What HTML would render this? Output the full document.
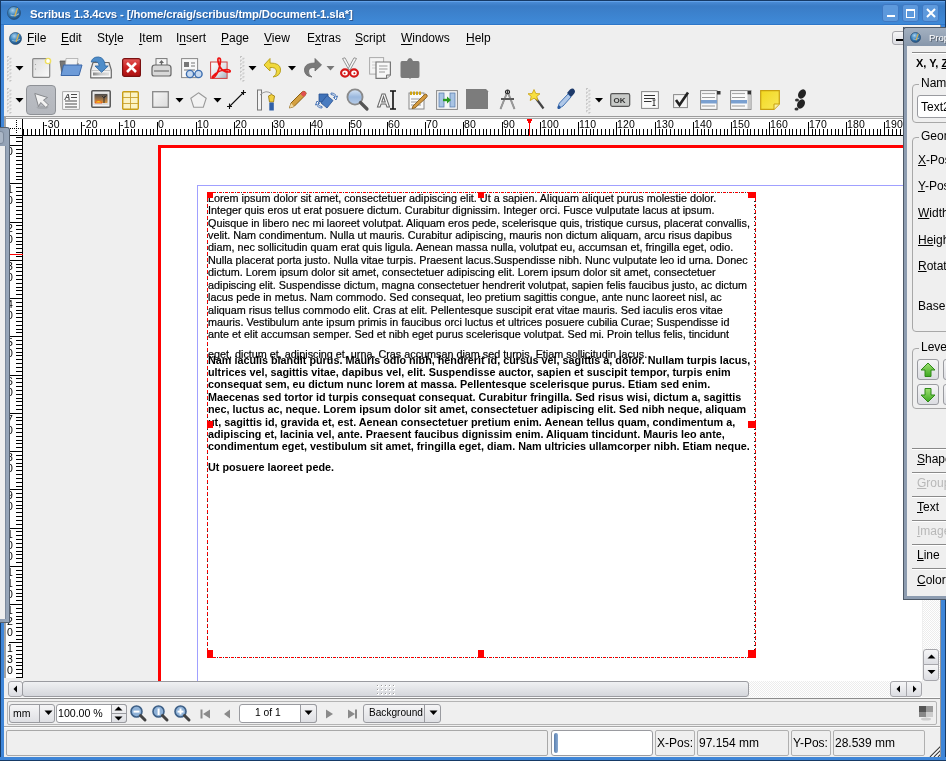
<!DOCTYPE html><html><head><meta charset="utf-8"><style>
*{margin:0;padding:0;box-sizing:border-box}
html,body{-webkit-font-smoothing:antialiased;width:946px;height:761px;overflow:hidden;background:#efefef;font-family:"Liberation Sans",sans-serif;position:relative;color:#000}
.a{position:absolute}
.t{position:absolute;white-space:pre;line-height:1;will-change:transform}
svg{position:absolute;overflow:visible}
u{text-decoration:none;border-bottom:1px solid #000;}
</style></head><body>
<div class="a" style="left:23px;top:136px;width:899px;height:545px;background:#efefef"></div>
<div class="a" style="left:158px;top:145px;width:764px;height:536px;background:#fff"></div>
<div class="a" style="left:158px;top:145px;width:3px;height:536px;background:#ff0000"></div>
<div class="a" style="left:158px;top:145px;width:764px;height:3px;background:#ff0000"></div>
<div class="a" style="left:197px;top:185px;width:725px;height:1px;background:#a0a0ff"></div>
<div class="a" style="left:197px;top:185px;width:1px;height:496px;background:#a0a0ff"></div>
<div class="a" style="left:207px;top:192px;width:549px;height:1px;background:repeating-linear-gradient(90deg,#ff0000 0 3px,#fff 3px 4px,#303030 4px 5px,#fff 5px 6px)"></div>
<div class="a" style="left:207px;top:657px;width:549px;height:1px;background:repeating-linear-gradient(90deg,#ff0000 0 3px,#fff 3px 4px,#303030 4px 5px,#fff 5px 6px)"></div>
<div class="a" style="left:207px;top:192px;width:1px;height:466px;background:repeating-linear-gradient(180deg,#ff0000 0 3px,#303030 3px 4px,#fff 4px 6px)"></div>
<div class="a" style="left:755px;top:192px;width:1px;height:466px;background:repeating-linear-gradient(180deg,#ff0000 0 3px,#303030 3px 4px,#fff 4px 6px)"></div>
<div class="a" style="left:754px;top:193px;width:1px;height:457px;background:repeating-linear-gradient(180deg,#222 0 1.5px,transparent 1.5px 4px)"></div>
<div class="t" style="left:207.6px;top:192.65px;font-size:10.81px;-webkit-text-stroke:0.2px #000">Lorem ipsum dolor sit amet, consectetuer adipiscing elit. Ut a sapien. Aliquam aliquet purus molestie dolor.</div>
<div class="t" style="left:207.6px;top:205.08px;font-size:10.81px;-webkit-text-stroke:0.2px #000">Integer quis eros ut erat posuere dictum. Curabitur dignissim. Integer orci. Fusce vulputate lacus at ipsum.</div>
<div class="t" style="left:207.6px;top:217.51px;font-size:10.81px;-webkit-text-stroke:0.2px #000">Quisque in libero nec mi laoreet volutpat. Aliquam eros pede, scelerisque quis, tristique cursus, placerat convallis,</div>
<div class="t" style="left:207.6px;top:229.94px;font-size:10.81px;-webkit-text-stroke:0.2px #000">velit. Nam condimentum. Nulla ut mauris. Curabitur adipiscing, mauris non dictum aliquam, arcu risus dapibus</div>
<div class="t" style="left:207.6px;top:242.37px;font-size:10.81px;-webkit-text-stroke:0.2px #000">diam, nec sollicitudin quam erat quis ligula. Aenean massa nulla, volutpat eu, accumsan et, fringilla eget, odio.</div>
<div class="t" style="left:207.6px;top:254.80px;font-size:10.81px;-webkit-text-stroke:0.2px #000">Nulla placerat porta justo. Nulla vitae turpis. Praesent lacus.Suspendisse nibh. Nunc vulputate leo id urna. Donec</div>
<div class="t" style="left:207.6px;top:267.23px;font-size:10.81px;-webkit-text-stroke:0.2px #000">dictum. Lorem ipsum dolor sit amet, consectetuer adipiscing elit. Lorem ipsum dolor sit amet, consectetuer</div>
<div class="t" style="left:207.6px;top:279.66px;font-size:10.81px;-webkit-text-stroke:0.2px #000">adipiscing elit. Suspendisse dictum, magna consectetuer hendrerit volutpat, sapien felis faucibus justo, ac dictum</div>
<div class="t" style="left:207.6px;top:292.09px;font-size:10.81px;-webkit-text-stroke:0.2px #000">lacus pede in metus. Nam commodo. Sed consequat, leo pretium sagittis congue, ante nunc laoreet nisl, ac</div>
<div class="t" style="left:207.6px;top:304.52px;font-size:10.81px;-webkit-text-stroke:0.2px #000">aliquam risus tellus commodo elit. Cras at elit. Pellentesque suscipit erat vitae mauris. Sed iaculis eros vitae</div>
<div class="t" style="left:207.6px;top:316.95px;font-size:10.81px;-webkit-text-stroke:0.2px #000">mauris. Vestibulum ante ipsum primis in faucibus orci luctus et ultrices posuere cubilia Curae; Suspendisse id</div>
<div class="t" style="left:207.6px;top:329.38px;font-size:10.81px;-webkit-text-stroke:0.2px #000">ante et elit accumsan semper. Sed et nibh eget purus scelerisque volutpat. Sed mi. Proin tellus felis, tincidunt</div>
<div class="t" style="left:207.6px;top:348.65px;font-size:10.81px;-webkit-text-stroke:0.2px #000">eget, dictum et, adipiscing et, urna. Cras accumsan diam sed turpis. Etiam sollicitudin lacus.</div>
<div class="t" style="left:207.6px;top:354.65px;font-size:10.81px;font-weight:bold">Nam iaculis blandit purus. Mauris odio nibh, hendrerit id, cursus vel, sagittis a, dolor. Nullam turpis lacus,</div>
<div class="t" style="left:207.6px;top:367.05px;font-size:10.81px;font-weight:bold">ultrices vel, sagittis vitae, dapibus vel, elit. Suspendisse auctor, sapien et suscipit tempor, turpis enim</div>
<div class="t" style="left:207.6px;top:379.45px;font-size:10.81px;font-weight:bold">consequat sem, eu dictum nunc lorem at massa. Pellentesque scelerisque purus. Etiam sed enim.</div>
<div class="t" style="left:207.6px;top:391.85px;font-size:10.81px;font-weight:bold">Maecenas sed tortor id turpis consequat consequat. Curabitur fringilla. Sed risus wisi, dictum a, sagittis</div>
<div class="t" style="left:207.6px;top:404.25px;font-size:10.81px;font-weight:bold">nec, luctus ac, neque. Lorem ipsum dolor sit amet, consectetuer adipiscing elit. Sed nibh neque, aliquam</div>
<div class="t" style="left:207.6px;top:416.65px;font-size:10.81px;font-weight:bold">ut, sagittis id, gravida et, est. Aenean consectetuer pretium enim. Aenean tellus quam, condimentum a,</div>
<div class="t" style="left:207.6px;top:429.05px;font-size:10.81px;font-weight:bold">adipiscing et, lacinia vel, ante. Praesent faucibus dignissim enim. Aliquam tincidunt. Mauris leo ante,</div>
<div class="t" style="left:207.6px;top:441.45px;font-size:10.81px;font-weight:bold">condimentum eget, vestibulum sit amet, fringilla eget, diam. Nam ultricies ullamcorper nibh. Etiam neque.</div>
<div class="t" style="left:207.6px;top:461.95px;font-size:10.81px;font-weight:bold">Ut posuere laoreet pede.</div>
<div class="a" style="left:207px;top:192px;width:6px;height:6px;background:#ff0000"></div>
<div class="a" style="left:478px;top:192px;width:6px;height:6px;background:#ff0000"></div>
<div class="a" style="left:748px;top:192px;width:8px;height:6px;background:#ff0000"></div>
<div class="a" style="left:207px;top:421px;width:6px;height:7px;background:#ff0000"></div>
<div class="a" style="left:748px;top:421px;width:8px;height:7px;background:#ff0000"></div>
<div class="a" style="left:207px;top:650px;width:6px;height:8px;background:#ff0000"></div>
<div class="a" style="left:478px;top:650px;width:6px;height:8px;background:#ff0000"></div>
<div class="a" style="left:748px;top:650px;width:8px;height:8px;background:#ff0000"></div>
<div class="a" style="left:4px;top:116px;width:938px;height:1px;background:#9c9c9c"></div>
<div class="a" style="left:4px;top:118px;width:938px;height:1px;background:#a8a8a8"></div>
<div class="a" style="left:6px;top:119px;width:916px;height:16px;background:#fff"></div>
<div class="a" style="left:6px;top:135px;width:916px;height:1px;background:#000"></div>
<div class="a" style="left:23px;top:129px;width:1px;height:6px;background:#000"></div><div class="a" style="left:27px;top:129px;width:1px;height:6px;background:#000"></div><div class="a" style="left:31px;top:129px;width:1px;height:6px;background:#000"></div><div class="a" style="left:35px;top:129px;width:1px;height:6px;background:#000"></div><div class="a" style="left:39px;top:129px;width:1px;height:6px;background:#000"></div><div class="a" style="left:43px;top:122px;width:1px;height:13px;background:#000"></div><div class="t" style="left:44px;top:119.01px;font-size:10.5px;letter-spacing:0.2px">-30</div><div class="a" style="left:46px;top:129px;width:1px;height:6px;background:#000"></div><div class="a" style="left:50px;top:129px;width:1px;height:6px;background:#000"></div><div class="a" style="left:54px;top:129px;width:1px;height:6px;background:#000"></div><div class="a" style="left:58px;top:129px;width:1px;height:6px;background:#000"></div><div class="a" style="left:62px;top:129px;width:1px;height:6px;background:#000"></div><div class="a" style="left:65px;top:129px;width:1px;height:6px;background:#000"></div><div class="a" style="left:69px;top:129px;width:1px;height:6px;background:#000"></div><div class="a" style="left:73px;top:129px;width:1px;height:6px;background:#000"></div><div class="a" style="left:77px;top:129px;width:1px;height:6px;background:#000"></div><div class="a" style="left:81px;top:122px;width:1px;height:13px;background:#000"></div><div class="t" style="left:82px;top:119.01px;font-size:10.5px;letter-spacing:0.2px">-20</div><div class="a" style="left:85px;top:129px;width:1px;height:6px;background:#000"></div><div class="a" style="left:88px;top:129px;width:1px;height:6px;background:#000"></div><div class="a" style="left:92px;top:129px;width:1px;height:6px;background:#000"></div><div class="a" style="left:96px;top:129px;width:1px;height:6px;background:#000"></div><div class="a" style="left:100px;top:129px;width:1px;height:6px;background:#000"></div><div class="a" style="left:104px;top:129px;width:1px;height:6px;background:#000"></div><div class="a" style="left:108px;top:129px;width:1px;height:6px;background:#000"></div><div class="a" style="left:111px;top:129px;width:1px;height:6px;background:#000"></div><div class="a" style="left:115px;top:129px;width:1px;height:6px;background:#000"></div><div class="a" style="left:119px;top:122px;width:1px;height:13px;background:#000"></div><div class="t" style="left:120px;top:119.01px;font-size:10.5px;letter-spacing:0.2px">-10</div><div class="a" style="left:123px;top:129px;width:1px;height:6px;background:#000"></div><div class="a" style="left:127px;top:129px;width:1px;height:6px;background:#000"></div><div class="a" style="left:131px;top:129px;width:1px;height:6px;background:#000"></div><div class="a" style="left:134px;top:129px;width:1px;height:6px;background:#000"></div><div class="a" style="left:138px;top:129px;width:1px;height:6px;background:#000"></div><div class="a" style="left:142px;top:129px;width:1px;height:6px;background:#000"></div><div class="a" style="left:146px;top:129px;width:1px;height:6px;background:#000"></div><div class="a" style="left:150px;top:129px;width:1px;height:6px;background:#000"></div><div class="a" style="left:153px;top:129px;width:1px;height:6px;background:#000"></div><div class="a" style="left:157px;top:122px;width:1px;height:13px;background:#000"></div><div class="t" style="left:158px;top:119.01px;font-size:10.5px;letter-spacing:0.2px">0</div><div class="a" style="left:161px;top:129px;width:1px;height:6px;background:#000"></div><div class="a" style="left:165px;top:129px;width:1px;height:6px;background:#000"></div><div class="a" style="left:169px;top:129px;width:1px;height:6px;background:#000"></div><div class="a" style="left:173px;top:129px;width:1px;height:6px;background:#000"></div><div class="a" style="left:176px;top:129px;width:1px;height:6px;background:#000"></div><div class="a" style="left:180px;top:129px;width:1px;height:6px;background:#000"></div><div class="a" style="left:184px;top:129px;width:1px;height:6px;background:#000"></div><div class="a" style="left:188px;top:129px;width:1px;height:6px;background:#000"></div><div class="a" style="left:192px;top:129px;width:1px;height:6px;background:#000"></div><div class="a" style="left:196px;top:122px;width:1px;height:13px;background:#000"></div><div class="t" style="left:197px;top:119.01px;font-size:10.5px;letter-spacing:0.2px">10</div><div class="a" style="left:199px;top:129px;width:1px;height:6px;background:#000"></div><div class="a" style="left:203px;top:129px;width:1px;height:6px;background:#000"></div><div class="a" style="left:207px;top:129px;width:1px;height:6px;background:#000"></div><div class="a" style="left:211px;top:129px;width:1px;height:6px;background:#000"></div><div class="a" style="left:215px;top:129px;width:1px;height:6px;background:#000"></div><div class="a" style="left:219px;top:129px;width:1px;height:6px;background:#000"></div><div class="a" style="left:222px;top:129px;width:1px;height:6px;background:#000"></div><div class="a" style="left:226px;top:129px;width:1px;height:6px;background:#000"></div><div class="a" style="left:230px;top:129px;width:1px;height:6px;background:#000"></div><div class="a" style="left:234px;top:122px;width:1px;height:13px;background:#000"></div><div class="t" style="left:235px;top:119.01px;font-size:10.5px;letter-spacing:0.2px">20</div><div class="a" style="left:238px;top:129px;width:1px;height:6px;background:#000"></div><div class="a" style="left:241px;top:129px;width:1px;height:6px;background:#000"></div><div class="a" style="left:245px;top:129px;width:1px;height:6px;background:#000"></div><div class="a" style="left:249px;top:129px;width:1px;height:6px;background:#000"></div><div class="a" style="left:253px;top:129px;width:1px;height:6px;background:#000"></div><div class="a" style="left:257px;top:129px;width:1px;height:6px;background:#000"></div><div class="a" style="left:261px;top:129px;width:1px;height:6px;background:#000"></div><div class="a" style="left:264px;top:129px;width:1px;height:6px;background:#000"></div><div class="a" style="left:268px;top:129px;width:1px;height:6px;background:#000"></div><div class="a" style="left:272px;top:122px;width:1px;height:13px;background:#000"></div><div class="t" style="left:273px;top:119.01px;font-size:10.5px;letter-spacing:0.2px">30</div><div class="a" style="left:276px;top:129px;width:1px;height:6px;background:#000"></div><div class="a" style="left:280px;top:129px;width:1px;height:6px;background:#000"></div><div class="a" style="left:284px;top:129px;width:1px;height:6px;background:#000"></div><div class="a" style="left:287px;top:129px;width:1px;height:6px;background:#000"></div><div class="a" style="left:291px;top:129px;width:1px;height:6px;background:#000"></div><div class="a" style="left:295px;top:129px;width:1px;height:6px;background:#000"></div><div class="a" style="left:299px;top:129px;width:1px;height:6px;background:#000"></div><div class="a" style="left:303px;top:129px;width:1px;height:6px;background:#000"></div><div class="a" style="left:307px;top:129px;width:1px;height:6px;background:#000"></div><div class="a" style="left:310px;top:122px;width:1px;height:13px;background:#000"></div><div class="t" style="left:311px;top:119.01px;font-size:10.5px;letter-spacing:0.2px">40</div><div class="a" style="left:314px;top:129px;width:1px;height:6px;background:#000"></div><div class="a" style="left:318px;top:129px;width:1px;height:6px;background:#000"></div><div class="a" style="left:322px;top:129px;width:1px;height:6px;background:#000"></div><div class="a" style="left:326px;top:129px;width:1px;height:6px;background:#000"></div><div class="a" style="left:329px;top:129px;width:1px;height:6px;background:#000"></div><div class="a" style="left:333px;top:129px;width:1px;height:6px;background:#000"></div><div class="a" style="left:337px;top:129px;width:1px;height:6px;background:#000"></div><div class="a" style="left:341px;top:129px;width:1px;height:6px;background:#000"></div><div class="a" style="left:345px;top:129px;width:1px;height:6px;background:#000"></div><div class="a" style="left:349px;top:122px;width:1px;height:13px;background:#000"></div><div class="t" style="left:350px;top:119.01px;font-size:10.5px;letter-spacing:0.2px">50</div><div class="a" style="left:352px;top:129px;width:1px;height:6px;background:#000"></div><div class="a" style="left:356px;top:129px;width:1px;height:6px;background:#000"></div><div class="a" style="left:360px;top:129px;width:1px;height:6px;background:#000"></div><div class="a" style="left:364px;top:129px;width:1px;height:6px;background:#000"></div><div class="a" style="left:368px;top:129px;width:1px;height:6px;background:#000"></div><div class="a" style="left:372px;top:129px;width:1px;height:6px;background:#000"></div><div class="a" style="left:375px;top:129px;width:1px;height:6px;background:#000"></div><div class="a" style="left:379px;top:129px;width:1px;height:6px;background:#000"></div><div class="a" style="left:383px;top:129px;width:1px;height:6px;background:#000"></div><div class="a" style="left:387px;top:122px;width:1px;height:13px;background:#000"></div><div class="t" style="left:388px;top:119.01px;font-size:10.5px;letter-spacing:0.2px">60</div><div class="a" style="left:391px;top:129px;width:1px;height:6px;background:#000"></div><div class="a" style="left:395px;top:129px;width:1px;height:6px;background:#000"></div><div class="a" style="left:398px;top:129px;width:1px;height:6px;background:#000"></div><div class="a" style="left:402px;top:129px;width:1px;height:6px;background:#000"></div><div class="a" style="left:406px;top:129px;width:1px;height:6px;background:#000"></div><div class="a" style="left:410px;top:129px;width:1px;height:6px;background:#000"></div><div class="a" style="left:414px;top:129px;width:1px;height:6px;background:#000"></div><div class="a" style="left:417px;top:129px;width:1px;height:6px;background:#000"></div><div class="a" style="left:421px;top:129px;width:1px;height:6px;background:#000"></div><div class="a" style="left:425px;top:122px;width:1px;height:13px;background:#000"></div><div class="t" style="left:426px;top:119.01px;font-size:10.5px;letter-spacing:0.2px">70</div><div class="a" style="left:429px;top:129px;width:1px;height:6px;background:#000"></div><div class="a" style="left:433px;top:129px;width:1px;height:6px;background:#000"></div><div class="a" style="left:437px;top:129px;width:1px;height:6px;background:#000"></div><div class="a" style="left:440px;top:129px;width:1px;height:6px;background:#000"></div><div class="a" style="left:444px;top:129px;width:1px;height:6px;background:#000"></div><div class="a" style="left:448px;top:129px;width:1px;height:6px;background:#000"></div><div class="a" style="left:452px;top:129px;width:1px;height:6px;background:#000"></div><div class="a" style="left:456px;top:129px;width:1px;height:6px;background:#000"></div><div class="a" style="left:460px;top:129px;width:1px;height:6px;background:#000"></div><div class="a" style="left:463px;top:122px;width:1px;height:13px;background:#000"></div><div class="t" style="left:464px;top:119.01px;font-size:10.5px;letter-spacing:0.2px">80</div><div class="a" style="left:467px;top:129px;width:1px;height:6px;background:#000"></div><div class="a" style="left:471px;top:129px;width:1px;height:6px;background:#000"></div><div class="a" style="left:475px;top:129px;width:1px;height:6px;background:#000"></div><div class="a" style="left:479px;top:129px;width:1px;height:6px;background:#000"></div><div class="a" style="left:483px;top:129px;width:1px;height:6px;background:#000"></div><div class="a" style="left:486px;top:129px;width:1px;height:6px;background:#000"></div><div class="a" style="left:490px;top:129px;width:1px;height:6px;background:#000"></div><div class="a" style="left:494px;top:129px;width:1px;height:6px;background:#000"></div><div class="a" style="left:498px;top:129px;width:1px;height:6px;background:#000"></div><div class="a" style="left:502px;top:122px;width:1px;height:13px;background:#000"></div><div class="t" style="left:503px;top:119.01px;font-size:10.5px;letter-spacing:0.2px">90</div><div class="a" style="left:505px;top:129px;width:1px;height:6px;background:#000"></div><div class="a" style="left:509px;top:129px;width:1px;height:6px;background:#000"></div><div class="a" style="left:513px;top:129px;width:1px;height:6px;background:#000"></div><div class="a" style="left:517px;top:129px;width:1px;height:6px;background:#000"></div><div class="a" style="left:521px;top:129px;width:1px;height:6px;background:#000"></div><div class="a" style="left:525px;top:129px;width:1px;height:6px;background:#000"></div><div class="a" style="left:528px;top:129px;width:1px;height:6px;background:#000"></div><div class="a" style="left:532px;top:129px;width:1px;height:6px;background:#000"></div><div class="a" style="left:536px;top:129px;width:1px;height:6px;background:#000"></div><div class="a" style="left:540px;top:122px;width:1px;height:13px;background:#000"></div><div class="t" style="left:541px;top:119.01px;font-size:10.5px;letter-spacing:0.2px">100</div><div class="a" style="left:544px;top:129px;width:1px;height:6px;background:#000"></div><div class="a" style="left:548px;top:129px;width:1px;height:6px;background:#000"></div><div class="a" style="left:551px;top:129px;width:1px;height:6px;background:#000"></div><div class="a" style="left:555px;top:129px;width:1px;height:6px;background:#000"></div><div class="a" style="left:559px;top:129px;width:1px;height:6px;background:#000"></div><div class="a" style="left:563px;top:129px;width:1px;height:6px;background:#000"></div><div class="a" style="left:567px;top:129px;width:1px;height:6px;background:#000"></div><div class="a" style="left:571px;top:129px;width:1px;height:6px;background:#000"></div><div class="a" style="left:574px;top:129px;width:1px;height:6px;background:#000"></div><div class="a" style="left:578px;top:122px;width:1px;height:13px;background:#000"></div><div class="t" style="left:579px;top:119.01px;font-size:10.5px;letter-spacing:0.2px">110</div><div class="a" style="left:582px;top:129px;width:1px;height:6px;background:#000"></div><div class="a" style="left:586px;top:129px;width:1px;height:6px;background:#000"></div><div class="a" style="left:590px;top:129px;width:1px;height:6px;background:#000"></div><div class="a" style="left:593px;top:129px;width:1px;height:6px;background:#000"></div><div class="a" style="left:597px;top:129px;width:1px;height:6px;background:#000"></div><div class="a" style="left:601px;top:129px;width:1px;height:6px;background:#000"></div><div class="a" style="left:605px;top:129px;width:1px;height:6px;background:#000"></div><div class="a" style="left:609px;top:129px;width:1px;height:6px;background:#000"></div><div class="a" style="left:613px;top:129px;width:1px;height:6px;background:#000"></div><div class="a" style="left:616px;top:122px;width:1px;height:13px;background:#000"></div><div class="t" style="left:617px;top:119.01px;font-size:10.5px;letter-spacing:0.2px">120</div><div class="a" style="left:620px;top:129px;width:1px;height:6px;background:#000"></div><div class="a" style="left:624px;top:129px;width:1px;height:6px;background:#000"></div><div class="a" style="left:628px;top:129px;width:1px;height:6px;background:#000"></div><div class="a" style="left:632px;top:129px;width:1px;height:6px;background:#000"></div><div class="a" style="left:636px;top:129px;width:1px;height:6px;background:#000"></div><div class="a" style="left:639px;top:129px;width:1px;height:6px;background:#000"></div><div class="a" style="left:643px;top:129px;width:1px;height:6px;background:#000"></div><div class="a" style="left:647px;top:129px;width:1px;height:6px;background:#000"></div><div class="a" style="left:651px;top:129px;width:1px;height:6px;background:#000"></div><div class="a" style="left:655px;top:122px;width:1px;height:13px;background:#000"></div><div class="t" style="left:656px;top:119.01px;font-size:10.5px;letter-spacing:0.2px">130</div><div class="a" style="left:659px;top:129px;width:1px;height:6px;background:#000"></div><div class="a" style="left:662px;top:129px;width:1px;height:6px;background:#000"></div><div class="a" style="left:666px;top:129px;width:1px;height:6px;background:#000"></div><div class="a" style="left:670px;top:129px;width:1px;height:6px;background:#000"></div><div class="a" style="left:674px;top:129px;width:1px;height:6px;background:#000"></div><div class="a" style="left:678px;top:129px;width:1px;height:6px;background:#000"></div><div class="a" style="left:681px;top:129px;width:1px;height:6px;background:#000"></div><div class="a" style="left:685px;top:129px;width:1px;height:6px;background:#000"></div><div class="a" style="left:689px;top:129px;width:1px;height:6px;background:#000"></div><div class="a" style="left:693px;top:122px;width:1px;height:13px;background:#000"></div><div class="t" style="left:694px;top:119.01px;font-size:10.5px;letter-spacing:0.2px">140</div><div class="a" style="left:697px;top:129px;width:1px;height:6px;background:#000"></div><div class="a" style="left:701px;top:129px;width:1px;height:6px;background:#000"></div><div class="a" style="left:704px;top:129px;width:1px;height:6px;background:#000"></div><div class="a" style="left:708px;top:129px;width:1px;height:6px;background:#000"></div><div class="a" style="left:712px;top:129px;width:1px;height:6px;background:#000"></div><div class="a" style="left:716px;top:129px;width:1px;height:6px;background:#000"></div><div class="a" style="left:720px;top:129px;width:1px;height:6px;background:#000"></div><div class="a" style="left:724px;top:129px;width:1px;height:6px;background:#000"></div><div class="a" style="left:727px;top:129px;width:1px;height:6px;background:#000"></div><div class="a" style="left:731px;top:122px;width:1px;height:13px;background:#000"></div><div class="t" style="left:732px;top:119.01px;font-size:10.5px;letter-spacing:0.2px">150</div><div class="a" style="left:735px;top:129px;width:1px;height:6px;background:#000"></div><div class="a" style="left:739px;top:129px;width:1px;height:6px;background:#000"></div><div class="a" style="left:743px;top:129px;width:1px;height:6px;background:#000"></div><div class="a" style="left:747px;top:129px;width:1px;height:6px;background:#000"></div><div class="a" style="left:750px;top:129px;width:1px;height:6px;background:#000"></div><div class="a" style="left:754px;top:129px;width:1px;height:6px;background:#000"></div><div class="a" style="left:758px;top:129px;width:1px;height:6px;background:#000"></div><div class="a" style="left:762px;top:129px;width:1px;height:6px;background:#000"></div><div class="a" style="left:766px;top:129px;width:1px;height:6px;background:#000"></div><div class="a" style="left:769px;top:122px;width:1px;height:13px;background:#000"></div><div class="t" style="left:770px;top:119.01px;font-size:10.5px;letter-spacing:0.2px">160</div><div class="a" style="left:773px;top:129px;width:1px;height:6px;background:#000"></div><div class="a" style="left:777px;top:129px;width:1px;height:6px;background:#000"></div><div class="a" style="left:781px;top:129px;width:1px;height:6px;background:#000"></div><div class="a" style="left:785px;top:129px;width:1px;height:6px;background:#000"></div><div class="a" style="left:789px;top:129px;width:1px;height:6px;background:#000"></div><div class="a" style="left:792px;top:129px;width:1px;height:6px;background:#000"></div><div class="a" style="left:796px;top:129px;width:1px;height:6px;background:#000"></div><div class="a" style="left:800px;top:129px;width:1px;height:6px;background:#000"></div><div class="a" style="left:804px;top:129px;width:1px;height:6px;background:#000"></div><div class="a" style="left:808px;top:122px;width:1px;height:13px;background:#000"></div><div class="t" style="left:809px;top:119.01px;font-size:10.5px;letter-spacing:0.2px">170</div><div class="a" style="left:812px;top:129px;width:1px;height:6px;background:#000"></div><div class="a" style="left:815px;top:129px;width:1px;height:6px;background:#000"></div><div class="a" style="left:819px;top:129px;width:1px;height:6px;background:#000"></div><div class="a" style="left:823px;top:129px;width:1px;height:6px;background:#000"></div><div class="a" style="left:827px;top:129px;width:1px;height:6px;background:#000"></div><div class="a" style="left:831px;top:129px;width:1px;height:6px;background:#000"></div><div class="a" style="left:835px;top:129px;width:1px;height:6px;background:#000"></div><div class="a" style="left:838px;top:129px;width:1px;height:6px;background:#000"></div><div class="a" style="left:842px;top:129px;width:1px;height:6px;background:#000"></div><div class="a" style="left:846px;top:122px;width:1px;height:13px;background:#000"></div><div class="t" style="left:847px;top:119.01px;font-size:10.5px;letter-spacing:0.2px">180</div><div class="a" style="left:850px;top:129px;width:1px;height:6px;background:#000"></div><div class="a" style="left:854px;top:129px;width:1px;height:6px;background:#000"></div><div class="a" style="left:857px;top:129px;width:1px;height:6px;background:#000"></div><div class="a" style="left:861px;top:129px;width:1px;height:6px;background:#000"></div><div class="a" style="left:865px;top:129px;width:1px;height:6px;background:#000"></div><div class="a" style="left:869px;top:129px;width:1px;height:6px;background:#000"></div><div class="a" style="left:873px;top:129px;width:1px;height:6px;background:#000"></div><div class="a" style="left:877px;top:129px;width:1px;height:6px;background:#000"></div><div class="a" style="left:880px;top:129px;width:1px;height:6px;background:#000"></div><div class="a" style="left:884px;top:122px;width:1px;height:13px;background:#000"></div><div class="t" style="left:885px;top:119.01px;font-size:10.5px;letter-spacing:0.2px">190</div><div class="a" style="left:888px;top:129px;width:1px;height:6px;background:#000"></div><div class="a" style="left:892px;top:129px;width:1px;height:6px;background:#000"></div><div class="a" style="left:896px;top:129px;width:1px;height:6px;background:#000"></div><div class="a" style="left:900px;top:129px;width:1px;height:6px;background:#000"></div><div class="a" style="left:903px;top:129px;width:1px;height:6px;background:#000"></div><div class="a" style="left:907px;top:129px;width:1px;height:6px;background:#000"></div><div class="a" style="left:911px;top:129px;width:1px;height:6px;background:#000"></div><div class="a" style="left:915px;top:129px;width:1px;height:6px;background:#000"></div><div class="a" style="left:919px;top:129px;width:1px;height:6px;background:#000"></div>
<svg style="left:0;top:0" width="30" height="140"><rect x="16" y="120" width="1" height="1"/><rect x="16" y="122" width="1" height="1"/><rect x="16" y="124" width="1" height="1"/><rect x="16" y="126" width="1" height="1"/><rect x="16" y="128" width="1" height="1"/><rect x="16" y="130" width="1" height="1"/><rect x="16" y="132" width="1" height="1"/><rect x="8" y="128" width="1" height="1"/><rect x="10" y="128" width="1" height="1"/><rect x="12" y="128" width="1" height="1"/><rect x="14" y="128" width="1" height="1"/><rect x="16" y="128" width="1" height="1"/><rect x="18" y="128" width="1" height="1"/><rect x="20" y="128" width="1" height="1"/></svg>
<div class="a" style="left:22px;top:119px;width:1px;height:17px;background:#000"></div>
<div class="a" style="left:4px;top:116px;width:2px;height:562px;background:#a4a4a4"></div>
<div class="a" style="left:6px;top:136px;width:17px;height:542px;overflow:hidden;background:#fff;border-right:1px solid #000"><div class="a" style="left:10px;top:1px;width:6px;height:1px;background:#000"></div><div class="a" style="left:10px;top:5px;width:6px;height:1px;background:#000"></div><div class="a" style="left:3px;top:9px;width:13px;height:1px;background:#000"></div><div class="t" style="left:1px;top:10.41px;font-size:10.5px">0</div><div class="a" style="left:10px;top:13px;width:6px;height:1px;background:#000"></div><div class="a" style="left:10px;top:17px;width:6px;height:1px;background:#000"></div><div class="a" style="left:10px;top:20px;width:6px;height:1px;background:#000"></div><div class="a" style="left:10px;top:24px;width:6px;height:1px;background:#000"></div><div class="a" style="left:10px;top:28px;width:6px;height:1px;background:#000"></div><div class="a" style="left:10px;top:32px;width:6px;height:1px;background:#000"></div><div class="a" style="left:10px;top:36px;width:6px;height:1px;background:#000"></div><div class="a" style="left:10px;top:40px;width:6px;height:1px;background:#000"></div><div class="a" style="left:10px;top:43px;width:6px;height:1px;background:#000"></div><div class="a" style="left:3px;top:47px;width:13px;height:1px;background:#000"></div><div class="t" style="left:1px;top:48.41px;font-size:10.5px">1</div><div class="t" style="left:1px;top:59.31px;font-size:10.5px">0</div><div class="a" style="left:10px;top:51px;width:6px;height:1px;background:#000"></div><div class="a" style="left:10px;top:55px;width:6px;height:1px;background:#000"></div><div class="a" style="left:10px;top:59px;width:6px;height:1px;background:#000"></div><div class="a" style="left:10px;top:63px;width:6px;height:1px;background:#000"></div><div class="a" style="left:10px;top:66px;width:6px;height:1px;background:#000"></div><div class="a" style="left:10px;top:70px;width:6px;height:1px;background:#000"></div><div class="a" style="left:10px;top:74px;width:6px;height:1px;background:#000"></div><div class="a" style="left:10px;top:78px;width:6px;height:1px;background:#000"></div><div class="a" style="left:10px;top:82px;width:6px;height:1px;background:#000"></div><div class="a" style="left:3px;top:86px;width:13px;height:1px;background:#000"></div><div class="t" style="left:1px;top:87.41px;font-size:10.5px">2</div><div class="t" style="left:1px;top:98.31px;font-size:10.5px">0</div><div class="a" style="left:10px;top:89px;width:6px;height:1px;background:#000"></div><div class="a" style="left:10px;top:93px;width:6px;height:1px;background:#000"></div><div class="a" style="left:10px;top:97px;width:6px;height:1px;background:#000"></div><div class="a" style="left:10px;top:101px;width:6px;height:1px;background:#000"></div><div class="a" style="left:10px;top:105px;width:6px;height:1px;background:#000"></div><div class="a" style="left:10px;top:108px;width:6px;height:1px;background:#000"></div><div class="a" style="left:10px;top:112px;width:6px;height:1px;background:#000"></div><div class="a" style="left:10px;top:116px;width:6px;height:1px;background:#000"></div><div class="a" style="left:10px;top:120px;width:6px;height:1px;background:#000"></div><div class="a" style="left:3px;top:124px;width:13px;height:1px;background:#000"></div><div class="t" style="left:1px;top:125.41px;font-size:10.5px">3</div><div class="t" style="left:1px;top:136.31px;font-size:10.5px">0</div><div class="a" style="left:10px;top:128px;width:6px;height:1px;background:#000"></div><div class="a" style="left:10px;top:131px;width:6px;height:1px;background:#000"></div><div class="a" style="left:10px;top:135px;width:6px;height:1px;background:#000"></div><div class="a" style="left:10px;top:139px;width:6px;height:1px;background:#000"></div><div class="a" style="left:10px;top:143px;width:6px;height:1px;background:#000"></div><div class="a" style="left:10px;top:147px;width:6px;height:1px;background:#000"></div><div class="a" style="left:10px;top:151px;width:6px;height:1px;background:#000"></div><div class="a" style="left:10px;top:154px;width:6px;height:1px;background:#000"></div><div class="a" style="left:10px;top:158px;width:6px;height:1px;background:#000"></div><div class="a" style="left:3px;top:162px;width:13px;height:1px;background:#000"></div><div class="t" style="left:1px;top:163.41px;font-size:10.5px">4</div><div class="t" style="left:1px;top:174.31px;font-size:10.5px">0</div><div class="a" style="left:10px;top:166px;width:6px;height:1px;background:#000"></div><div class="a" style="left:10px;top:170px;width:6px;height:1px;background:#000"></div><div class="a" style="left:10px;top:174px;width:6px;height:1px;background:#000"></div><div class="a" style="left:10px;top:177px;width:6px;height:1px;background:#000"></div><div class="a" style="left:10px;top:181px;width:6px;height:1px;background:#000"></div><div class="a" style="left:10px;top:185px;width:6px;height:1px;background:#000"></div><div class="a" style="left:10px;top:189px;width:6px;height:1px;background:#000"></div><div class="a" style="left:10px;top:193px;width:6px;height:1px;background:#000"></div><div class="a" style="left:10px;top:196px;width:6px;height:1px;background:#000"></div><div class="a" style="left:3px;top:200px;width:13px;height:1px;background:#000"></div><div class="t" style="left:1px;top:201.41px;font-size:10.5px">5</div><div class="t" style="left:1px;top:212.31px;font-size:10.5px">0</div><div class="a" style="left:10px;top:204px;width:6px;height:1px;background:#000"></div><div class="a" style="left:10px;top:208px;width:6px;height:1px;background:#000"></div><div class="a" style="left:10px;top:212px;width:6px;height:1px;background:#000"></div><div class="a" style="left:10px;top:216px;width:6px;height:1px;background:#000"></div><div class="a" style="left:10px;top:219px;width:6px;height:1px;background:#000"></div><div class="a" style="left:10px;top:223px;width:6px;height:1px;background:#000"></div><div class="a" style="left:10px;top:227px;width:6px;height:1px;background:#000"></div><div class="a" style="left:10px;top:231px;width:6px;height:1px;background:#000"></div><div class="a" style="left:10px;top:235px;width:6px;height:1px;background:#000"></div><div class="a" style="left:3px;top:239px;width:13px;height:1px;background:#000"></div><div class="t" style="left:1px;top:240.41px;font-size:10.5px">6</div><div class="t" style="left:1px;top:251.31px;font-size:10.5px">0</div><div class="a" style="left:10px;top:242px;width:6px;height:1px;background:#000"></div><div class="a" style="left:10px;top:246px;width:6px;height:1px;background:#000"></div><div class="a" style="left:10px;top:250px;width:6px;height:1px;background:#000"></div><div class="a" style="left:10px;top:254px;width:6px;height:1px;background:#000"></div><div class="a" style="left:10px;top:258px;width:6px;height:1px;background:#000"></div><div class="a" style="left:10px;top:262px;width:6px;height:1px;background:#000"></div><div class="a" style="left:10px;top:265px;width:6px;height:1px;background:#000"></div><div class="a" style="left:10px;top:269px;width:6px;height:1px;background:#000"></div><div class="a" style="left:10px;top:273px;width:6px;height:1px;background:#000"></div><div class="a" style="left:3px;top:277px;width:13px;height:1px;background:#000"></div><div class="t" style="left:1px;top:278.41px;font-size:10.5px">7</div><div class="t" style="left:1px;top:289.31px;font-size:10.5px">0</div><div class="a" style="left:10px;top:281px;width:6px;height:1px;background:#000"></div><div class="a" style="left:10px;top:284px;width:6px;height:1px;background:#000"></div><div class="a" style="left:10px;top:288px;width:6px;height:1px;background:#000"></div><div class="a" style="left:10px;top:292px;width:6px;height:1px;background:#000"></div><div class="a" style="left:10px;top:296px;width:6px;height:1px;background:#000"></div><div class="a" style="left:10px;top:300px;width:6px;height:1px;background:#000"></div><div class="a" style="left:10px;top:304px;width:6px;height:1px;background:#000"></div><div class="a" style="left:10px;top:307px;width:6px;height:1px;background:#000"></div><div class="a" style="left:10px;top:311px;width:6px;height:1px;background:#000"></div><div class="a" style="left:3px;top:315px;width:13px;height:1px;background:#000"></div><div class="t" style="left:1px;top:316.41px;font-size:10.5px">8</div><div class="t" style="left:1px;top:327.31px;font-size:10.5px">0</div><div class="a" style="left:10px;top:319px;width:6px;height:1px;background:#000"></div><div class="a" style="left:10px;top:323px;width:6px;height:1px;background:#000"></div><div class="a" style="left:10px;top:327px;width:6px;height:1px;background:#000"></div><div class="a" style="left:10px;top:330px;width:6px;height:1px;background:#000"></div><div class="a" style="left:10px;top:334px;width:6px;height:1px;background:#000"></div><div class="a" style="left:10px;top:338px;width:6px;height:1px;background:#000"></div><div class="a" style="left:10px;top:342px;width:6px;height:1px;background:#000"></div><div class="a" style="left:10px;top:346px;width:6px;height:1px;background:#000"></div><div class="a" style="left:10px;top:350px;width:6px;height:1px;background:#000"></div><div class="a" style="left:3px;top:353px;width:13px;height:1px;background:#000"></div><div class="t" style="left:1px;top:354.41px;font-size:10.5px">9</div><div class="t" style="left:1px;top:365.31px;font-size:10.5px">0</div><div class="a" style="left:10px;top:357px;width:6px;height:1px;background:#000"></div><div class="a" style="left:10px;top:361px;width:6px;height:1px;background:#000"></div><div class="a" style="left:10px;top:365px;width:6px;height:1px;background:#000"></div><div class="a" style="left:10px;top:369px;width:6px;height:1px;background:#000"></div><div class="a" style="left:10px;top:372px;width:6px;height:1px;background:#000"></div><div class="a" style="left:10px;top:376px;width:6px;height:1px;background:#000"></div><div class="a" style="left:10px;top:380px;width:6px;height:1px;background:#000"></div><div class="a" style="left:10px;top:384px;width:6px;height:1px;background:#000"></div><div class="a" style="left:10px;top:388px;width:6px;height:1px;background:#000"></div><div class="a" style="left:3px;top:392px;width:13px;height:1px;background:#000"></div><div class="t" style="left:1px;top:393.41px;font-size:10.5px">1</div><div class="t" style="left:1px;top:404.31px;font-size:10.5px">0</div><div class="t" style="left:1px;top:415.21px;font-size:10.5px">0</div><div class="a" style="left:10px;top:395px;width:6px;height:1px;background:#000"></div><div class="a" style="left:10px;top:399px;width:6px;height:1px;background:#000"></div><div class="a" style="left:10px;top:403px;width:6px;height:1px;background:#000"></div><div class="a" style="left:10px;top:407px;width:6px;height:1px;background:#000"></div><div class="a" style="left:10px;top:411px;width:6px;height:1px;background:#000"></div><div class="a" style="left:10px;top:415px;width:6px;height:1px;background:#000"></div><div class="a" style="left:10px;top:418px;width:6px;height:1px;background:#000"></div><div class="a" style="left:10px;top:422px;width:6px;height:1px;background:#000"></div><div class="a" style="left:10px;top:426px;width:6px;height:1px;background:#000"></div><div class="a" style="left:3px;top:430px;width:13px;height:1px;background:#000"></div><div class="t" style="left:1px;top:431.41px;font-size:10.5px">1</div><div class="t" style="left:1px;top:442.31px;font-size:10.5px">1</div><div class="t" style="left:1px;top:453.21px;font-size:10.5px">0</div><div class="a" style="left:10px;top:434px;width:6px;height:1px;background:#000"></div><div class="a" style="left:10px;top:438px;width:6px;height:1px;background:#000"></div><div class="a" style="left:10px;top:441px;width:6px;height:1px;background:#000"></div><div class="a" style="left:10px;top:445px;width:6px;height:1px;background:#000"></div><div class="a" style="left:10px;top:449px;width:6px;height:1px;background:#000"></div><div class="a" style="left:10px;top:453px;width:6px;height:1px;background:#000"></div><div class="a" style="left:10px;top:457px;width:6px;height:1px;background:#000"></div><div class="a" style="left:10px;top:460px;width:6px;height:1px;background:#000"></div><div class="a" style="left:10px;top:464px;width:6px;height:1px;background:#000"></div><div class="a" style="left:3px;top:468px;width:13px;height:1px;background:#000"></div><div class="t" style="left:1px;top:469.41px;font-size:10.5px">1</div><div class="t" style="left:1px;top:480.31px;font-size:10.5px">2</div><div class="t" style="left:1px;top:491.21px;font-size:10.5px">0</div><div class="a" style="left:10px;top:472px;width:6px;height:1px;background:#000"></div><div class="a" style="left:10px;top:476px;width:6px;height:1px;background:#000"></div><div class="a" style="left:10px;top:480px;width:6px;height:1px;background:#000"></div><div class="a" style="left:10px;top:483px;width:6px;height:1px;background:#000"></div><div class="a" style="left:10px;top:487px;width:6px;height:1px;background:#000"></div><div class="a" style="left:10px;top:491px;width:6px;height:1px;background:#000"></div><div class="a" style="left:10px;top:495px;width:6px;height:1px;background:#000"></div><div class="a" style="left:10px;top:499px;width:6px;height:1px;background:#000"></div><div class="a" style="left:10px;top:503px;width:6px;height:1px;background:#000"></div><div class="a" style="left:3px;top:506px;width:13px;height:1px;background:#000"></div><div class="t" style="left:1px;top:507.41px;font-size:10.5px">1</div><div class="t" style="left:1px;top:518.31px;font-size:10.5px">3</div><div class="t" style="left:1px;top:529.21px;font-size:10.5px">0</div><div class="a" style="left:10px;top:510px;width:6px;height:1px;background:#000"></div><div class="a" style="left:10px;top:514px;width:6px;height:1px;background:#000"></div><div class="a" style="left:10px;top:518px;width:6px;height:1px;background:#000"></div><div class="a" style="left:10px;top:522px;width:6px;height:1px;background:#000"></div><div class="a" style="left:10px;top:526px;width:6px;height:1px;background:#000"></div><div class="a" style="left:10px;top:529px;width:6px;height:1px;background:#000"></div><div class="a" style="left:10px;top:533px;width:6px;height:1px;background:#000"></div><div class="a" style="left:10px;top:537px;width:6px;height:1px;background:#000"></div><div class="a" style="left:10px;top:541px;width:6px;height:1px;background:#000"></div></div>
<div class="a" style="left:4px;top:678px;width:19px;height:3px;background:#efefef"></div>
<div class="a" style="left:8px;top:681px;width:914px;height:16px;background-color:#fff;background-image:linear-gradient(45deg,#ececec 25%,transparent 25%,transparent 75%,#ececec 75%),linear-gradient(45deg,#ececec 25%,transparent 25%,transparent 75%,#ececec 75%);background-size:2px 2px;background-position:0 0,1px 1px"></div>
<div class="a" style="left:8px;top:681px;width:15px;height:16px;background:linear-gradient(#f6f6f7,#dcdde2);border:1px solid #a6a6ab;border-radius:3px"></div>
<svg style="left:12px;top:685px" width="8" height="8" viewBox="0 0 8 8"><path d="M5 0.5 L1.5 4 L5 7.5Z" fill="#000"/></svg>
<div class="a" style="left:22px;top:681px;width:727px;height:16px;background:linear-gradient(#f0f1f3,#d5d7dc);border:1px solid #9a9ba0;border-radius:3px"></div>
<svg style="left:0;top:0" width="946" height="761"><rect x="377" y="685" width="2" height="2" fill="#fff"/><rect x="377" y="685" width="1" height="1" fill="#999"/><rect x="377" y="689" width="2" height="2" fill="#fff"/><rect x="377" y="689" width="1" height="1" fill="#999"/><rect x="377" y="693" width="2" height="2" fill="#fff"/><rect x="377" y="693" width="1" height="1" fill="#999"/><rect x="381" y="685" width="2" height="2" fill="#fff"/><rect x="381" y="685" width="1" height="1" fill="#999"/><rect x="381" y="689" width="2" height="2" fill="#fff"/><rect x="381" y="689" width="1" height="1" fill="#999"/><rect x="381" y="693" width="2" height="2" fill="#fff"/><rect x="381" y="693" width="1" height="1" fill="#999"/><rect x="385" y="685" width="2" height="2" fill="#fff"/><rect x="385" y="685" width="1" height="1" fill="#999"/><rect x="385" y="689" width="2" height="2" fill="#fff"/><rect x="385" y="689" width="1" height="1" fill="#999"/><rect x="385" y="693" width="2" height="2" fill="#fff"/><rect x="385" y="693" width="1" height="1" fill="#999"/><rect x="389" y="685" width="2" height="2" fill="#fff"/><rect x="389" y="685" width="1" height="1" fill="#999"/><rect x="389" y="689" width="2" height="2" fill="#fff"/><rect x="389" y="689" width="1" height="1" fill="#999"/><rect x="389" y="693" width="2" height="2" fill="#fff"/><rect x="389" y="693" width="1" height="1" fill="#999"/><rect x="393" y="685" width="2" height="2" fill="#fff"/><rect x="393" y="685" width="1" height="1" fill="#999"/><rect x="393" y="689" width="2" height="2" fill="#fff"/><rect x="393" y="689" width="1" height="1" fill="#999"/><rect x="393" y="693" width="2" height="2" fill="#fff"/><rect x="393" y="693" width="1" height="1" fill="#999"/></svg>
<div class="a" style="left:890px;top:681px;width:17px;height:16px;background:linear-gradient(#f6f6f7,#dcdde2);border:1px solid #a6a6ab;border-radius:3px 0 0 3px"></div>
<div class="a" style="left:906px;top:681px;width:16px;height:16px;background:linear-gradient(#f6f6f7,#dcdde2);border:1px solid #a6a6ab;border-radius:0 3px 3px 0"></div>
<svg style="left:895px;top:685px" width="8" height="8" viewBox="0 0 8 8"><path d="M5 0.5 L1.5 4 L5 7.5Z" fill="#000"/></svg>
<svg style="left:911px;top:685px" width="8" height="8" viewBox="0 0 8 8"><path d="M2 0.5 L5.5 4 L2 7.5Z" fill="#000"/></svg>
<div class="a" style="left:923px;top:136px;width:17px;height:545px;background-color:#fff;background-image:linear-gradient(45deg,#ececec 25%,transparent 25%,transparent 75%,#ececec 75%),linear-gradient(45deg,#ececec 25%,transparent 25%,transparent 75%,#ececec 75%);background-size:2px 2px;background-position:0 0,1px 1px"></div>
<div class="a" style="left:923px;top:649px;width:16px;height:16px;background:linear-gradient(#f6f6f7,#dcdde2);border:1px solid #a6a6ab;border-radius:3px 3px 0 0"></div>
<div class="a" style="left:923px;top:664px;width:16px;height:17px;background:linear-gradient(#f6f6f7,#dcdde2);border:1px solid #a6a6ab;border-radius:0 0 3px 3px"></div>
<svg style="left:926.5px;top:653px" width="9" height="8" viewBox="0 0 9 8"><path d="M0.5 5.5 L4.5 1.5 L8.5 5.5Z" fill="#000"/></svg>
<svg style="left:926.5px;top:668px" width="9" height="8" viewBox="0 0 9 8"><path d="M0.5 2 L4.5 6 L8.5 2Z" fill="#000"/></svg>
<div class="a" style="left:4px;top:697px;width:938px;height:1px;background:#fafafa"></div>
<div class="a" style="left:4px;top:698px;width:938px;height:1px;background:#8c8c8c"></div>
<div class="a" style="left:7px;top:701px;width:930px;height:24px;border:1px solid #b4b4b4;border-radius:2px;background:#efefef"></div>
<div class="a" style="left:9px;top:704px;width:46px;height:19px;background:linear-gradient(#f5f5f6,#dfe0e4);border:1px solid #9a9ba0;border-radius:3px"></div>
<div class="a" style="left:39px;top:704px;width:1px;height:19px;background:#9a9ba0"></div>
<svg style="left:44px;top:710px" width="9" height="6" viewBox="0 0 9 6"><path d="M0.5 0.5 H8.5 L4.5 5Z" fill="#000"/></svg>
<div class="t" style="left:13px;top:707.61px;font-size:10.5px;">mm</div>
<div class="a" style="left:56px;top:704px;width:71px;height:19px;background:#fff;border:1px solid #9a9ba0;border-radius:3px"></div>
<div class="a" style="left:111px;top:704px;width:16px;height:19px;background:linear-gradient(#f5f5f6,#dfe0e4);border:1px solid #9a9ba0;border-radius:0 3px 3px 0"></div>
<div class="a" style="left:111px;top:713px;width:16px;height:1px;background:#9a9ba0"></div>
<svg style="left:114px;top:706px" width="9" height="5" viewBox="0 0 9 5"><path d="M0.5 4.5 L4.5 0.5 L8.5 4.5Z" fill="#000"/></svg>
<svg style="left:114px;top:716px" width="9" height="5" viewBox="0 0 9 5"><path d="M0.5 0.5 L4.5 4.5 L8.5 0.5Z" fill="#000"/></svg>
<div class="t" style="left:58px;top:708.03px;font-size:10.6px;">100.00 %</div>
<svg style="left:130px;top:705px" width="17" height="17" viewBox="0 0 17 17"><circle cx="6.5" cy="6.5" r="5.5" fill="#8fb2d8" stroke="#3d5f86" stroke-width="1.6"/><path d="M10.5 10.5 L15 15" stroke="#444" stroke-width="3" stroke-linecap="round"/><rect x="3.5" y="5.6" width="6" height="2" fill="#fff"/></svg>
<svg style="left:152px;top:705px" width="17" height="17" viewBox="0 0 17 17"><circle cx="6.5" cy="6.5" r="5.5" fill="#8fb2d8" stroke="#3d5f86" stroke-width="1.6"/><path d="M10.5 10.5 L15 15" stroke="#444" stroke-width="3" stroke-linecap="round"/><rect x="5.6" y="3.5" width="2" height="6.5" fill="#fff"/></svg>
<svg style="left:174px;top:705px" width="17" height="17" viewBox="0 0 17 17"><circle cx="6.5" cy="6.5" r="5.5" fill="#8fb2d8" stroke="#3d5f86" stroke-width="1.6"/><path d="M10.5 10.5 L15 15" stroke="#444" stroke-width="3" stroke-linecap="round"/><rect x="3.5" y="5.6" width="6" height="2" fill="#fff"/><rect x="5.5" y="3.5" width="2" height="6" fill="#fff"/></svg>
<svg style="left:200px;top:709px" width="11" height="10" viewBox="0 0 11 10"><rect x="0.5" y="0.5" width="2" height="9" fill="#8a8a8a"/><path d="M10 0.5 V9.5 L3 5Z" fill="#8a8a8a"/></svg>
<svg style="left:222px;top:709px" width="10" height="10" viewBox="0 0 10 10"><path d="M8 0.5 V9.5 L2 5Z" fill="#8a8a8a"/></svg>
<div class="a" style="left:239px;top:704px;width:78px;height:19px;background:#fff;border:1px solid #9a9ba0;border-radius:3px"></div>
<div class="a" style="left:300px;top:704px;width:17px;height:19px;background:linear-gradient(#f5f5f6,#dfe0e4);border:1px solid #9a9ba0;border-radius:0 3px 3px 0"></div>
<svg style="left:304px;top:710px" width="9" height="6" viewBox="0 0 9 6"><path d="M0.5 0.5 H8.5 L4.5 5Z" fill="#000"/></svg>
<div class="t" style="left:255px;top:708.28px;font-size:10.3px;">1 of 1</div>
<svg style="left:325px;top:709px" width="10" height="10" viewBox="0 0 10 10"><path d="M1 0.5 V9.5 L8 5Z" fill="#8a8a8a"/></svg>
<svg style="left:347px;top:709px" width="11" height="10" viewBox="0 0 11 10"><path d="M1 0.5 V9.5 L8 5Z" fill="#8a8a8a"/><rect x="8" y="0.5" width="2" height="9" fill="#8a8a8a"/></svg>
<div class="a" style="left:363px;top:704px;width:78px;height:19px;background:linear-gradient(#f5f5f6,#dfe0e4);border:1px solid #9a9ba0;border-radius:3px"></div>
<div class="a" style="left:424px;top:704px;width:1px;height:19px;background:#9a9ba0"></div>
<svg style="left:429px;top:710px" width="9" height="6" viewBox="0 0 9 6"><path d="M0.5 0.5 H8.5 L4.5 5Z" fill="#000"/></svg>
<div class="t" style="left:369px;top:707.95px;font-size:10.1px;">Background</div>
<svg style="left:918px;top:705px" width="16" height="16" viewBox="0 0 16 16"><rect x="1" y="1" width="7" height="6" fill="#555"/><rect x="8" y="1" width="7" height="6" fill="#999"/><rect x="1" y="7" width="7" height="5" fill="#888"/><rect x="8" y="7" width="7" height="5" fill="#ccc"/><ellipse cx="8" cy="14" rx="5" ry="1.5" fill="#ccc"/></svg>
<div class="a" style="left:4px;top:726px;width:938px;height:1px;background:#a8a8a8"></div>
<div class="a" style="left:4px;top:727px;width:938px;height:1px;background:#fafafa"></div>
<div class="a" style="left:6px;top:730px;width:542px;height:26px;border:1px solid #a8a8a8;border-radius:2px"></div>
<div class="a" style="left:551px;top:730px;width:102px;height:26px;border:1px solid #9a9ba0;border-radius:3px;background:#fff"></div>
<div class="a" style="left:554px;top:733px;width:4px;height:20px;background:linear-gradient(90deg,#5a7fae,#8aaad2);border-radius:2px"></div>
<div class="a" style="left:655px;top:730px;width:40px;height:26px;border:1px solid #b0b0b0;border-radius:2px"></div>
<div class="a" style="left:697px;top:730px;width:92px;height:26px;border:1px solid #b0b0b0;border-radius:2px"></div>
<div class="a" style="left:791px;top:730px;width:40px;height:26px;border:1px solid #b0b0b0;border-radius:2px"></div>
<div class="a" style="left:833px;top:730px;width:92px;height:26px;border:1px solid #b0b0b0;border-radius:2px"></div>
<div class="t" style="left:657px;top:736.84px;font-size:12px;">X-Pos:</div>
<div class="t" style="left:699px;top:736.84px;font-size:12px;">97.154 mm</div>
<div class="t" style="left:793px;top:736.84px;font-size:12px;">Y-Pos:</div>
<div class="t" style="left:835px;top:736.84px;font-size:12px;">28.539 mm</div>
<svg style="left:929px;top:745px" width="13" height="12" viewBox="0 0 13 12"><path d="M12 1 L1 12 M12 5 L5 12 M12 9 L9 12" stroke="#444" stroke-width="1.2"/><path d="M12 2.5 L2.5 12 M12 6.5 L6.5 12 M12 10.5 L10.5 12" stroke="#fff" stroke-width="1"/></svg>
<div class="a" style="left:0px;top:0px;width:946px;height:25px;background:linear-gradient(#62a2ea 0,#62a2ea 1px,#4a8bd5 1px,#3a7cc6 5px,#3f8ad8 23px,#2d76c8 23px);border-top:1px solid #163a66;border-left:1px solid #163a66;border-right:1px solid #163a66"></div>
<div class="a" style="left:4px;top:25px;width:938px;height:1px;background:#f8f5f1"></div>
<div class="a" style="left:0px;top:25px;width:4px;height:736px;background:#3f86d8;border-left:1px solid #163a66"></div>
<div class="a" style="left:940px;top:25px;width:6px;height:736px;background:#3f86d8;border-left:1px solid #9a9a9a;border-right:1px solid #163a66"></div>
<div class="a" style="left:0px;top:757px;width:946px;height:4px;background:#3f86d8;border-bottom:1px solid #163a66"></div>
<svg style="left:7px;top:6px" width="14" height="14" viewBox="0 0 14 14"><defs><radialGradient id="sg76" cx="40%" cy="30%" r="70%"><stop offset="0" stop-color="#a9d0ec"/><stop offset="0.5" stop-color="#3d86c0"/><stop offset="1" stop-color="#1f4f80"/></radialGradient></defs><circle cx="7.0" cy="7.0" r="6.5" fill="url(#sg76)" stroke="#284e74" stroke-width="0.7"/><path d="M3.5 8.68 Q7.0 11.200000000000001 11.9 7.700000000000001" stroke="#bcd8ee" stroke-width="1.12" fill="none" opacity="0.7"/><path d="M10.5 2.1 L7.700000000000001 10.5" stroke="#d9b050" stroke-width="1.4000000000000001"/></svg>
<div class="t" style="left:31px;top:9.55px;font-size:11.4px;color:#2a5590;font-weight:bold;letter-spacing:-0.14px">Scribus 1.3.4cvs - [/home/craig/scribus/tmp/Document-1.sla*]</div>
<div class="t" style="left:30px;top:8.55px;font-size:11.4px;color:#fff;font-weight:bold;letter-spacing:-0.14px">Scribus 1.3.4cvs - [/home/craig/scribus/tmp/Document-1.sla*]</div>
<div class="a" style="left:882px;top:4px;width:17px;height:18px;background:#5d99dc;border-radius:3px;border:1px solid #3f78c2"></div>
<div class="a" style="left:902px;top:4px;width:17px;height:18px;background:#5d99dc;border-radius:3px;border:1px solid #3f78c2"></div>
<div class="a" style="left:922px;top:4px;width:17px;height:18px;background:#5d99dc;border-radius:3px;border:1px solid #3f78c2"></div>
<div class="a" style="left:887px;top:15px;width:8px;height:2px;background:#fff"></div>
<div class="a" style="left:906px;top:9px;width:9px;height:9px;border:1.5px solid #fff;border-top-width:2.5px"></div>
<svg style="left:926px;top:8px" width="10" height="10" viewBox="0 0 10 10"><path d="M1 1 L9 9 M9 1 L1 9" stroke="#fff" stroke-width="2"/></svg>
<svg style="left:9px;top:32px" width="13" height="13" viewBox="0 0 13 13"><defs><radialGradient id="sg932" cx="40%" cy="30%" r="70%"><stop offset="0" stop-color="#a9d0ec"/><stop offset="0.5" stop-color="#3d86c0"/><stop offset="1" stop-color="#1f4f80"/></radialGradient></defs><circle cx="6.5" cy="6.5" r="6.0" fill="url(#sg932)" stroke="#284e74" stroke-width="0.7"/><path d="M3.25 8.06 Q6.5 10.4 11.049999999999999 7.15" stroke="#bcd8ee" stroke-width="1.04" fill="none" opacity="0.7"/><path d="M9.75 1.95 L7.15 9.75" stroke="#d9b050" stroke-width="1.3"/></svg>
<div class="t" style="left:27px;top:31.84px;font-size:12px;"><span style="text-decoration:underline;text-underline-offset:1.5px">F</span>ile</div>
<div class="t" style="left:61px;top:31.84px;font-size:12px;"><span style="text-decoration:underline;text-underline-offset:1.5px">E</span>dit</div>
<div class="t" style="left:97px;top:31.84px;font-size:12px;">Sty<span style="text-decoration:underline;text-underline-offset:1.5px">l</span>e</div>
<div class="t" style="left:139px;top:31.84px;font-size:12px;"><span style="text-decoration:underline;text-underline-offset:1.5px">I</span>tem</div>
<div class="t" style="left:176px;top:31.84px;font-size:12px;">I<span style="text-decoration:underline;text-underline-offset:1.5px">n</span>sert</div>
<div class="t" style="left:221px;top:31.84px;font-size:12px;"><span style="text-decoration:underline;text-underline-offset:1.5px">P</span>age</div>
<div class="t" style="left:264px;top:31.84px;font-size:12px;"><span style="text-decoration:underline;text-underline-offset:1.5px">V</span>iew</div>
<div class="t" style="left:306.5px;top:31.84px;font-size:12px;">E<span style="text-decoration:underline;text-underline-offset:1.5px">x</span>tras</div>
<div class="t" style="left:355px;top:31.84px;font-size:12px;"><span style="text-decoration:underline;text-underline-offset:1.5px">S</span>cript</div>
<div class="t" style="left:401px;top:31.84px;font-size:12px;"><span style="text-decoration:underline;text-underline-offset:1.5px">W</span>indows</div>
<div class="t" style="left:466px;top:31.84px;font-size:12px;"><span style="text-decoration:underline;text-underline-offset:1.5px">H</span>elp</div>
<div class="a" style="left:892px;top:31px;width:20px;height:14px;background:linear-gradient(#f5f5f6,#dcdde2);border:1px solid #a6a6ab;border-radius:3px"></div>
<div class="a" style="left:896px;top:39px;width:7px;height:2px;background:#000"></div>
<svg style="left:0;top:0" width="946" height="120"><rect x="7" y="56.0" width="2" height="1" fill="#c4c4c4"/><rect x="7" y="57.0" width="1" height="1" fill="#c4c4c4"/><rect x="9.5" y="57.8" width="2" height="1" fill="#c4c4c4"/><rect x="9.5" y="58.8" width="1" height="1" fill="#c4c4c4"/><rect x="7" y="59.7" width="2" height="1" fill="#c4c4c4"/><rect x="7" y="60.7" width="1" height="1" fill="#c4c4c4"/><rect x="9.5" y="61.5" width="2" height="1" fill="#c4c4c4"/><rect x="9.5" y="62.5" width="1" height="1" fill="#c4c4c4"/><rect x="7" y="63.4" width="2" height="1" fill="#c4c4c4"/><rect x="7" y="64.4" width="1" height="1" fill="#c4c4c4"/><rect x="9.5" y="65.2" width="2" height="1" fill="#c4c4c4"/><rect x="9.5" y="66.2" width="1" height="1" fill="#c4c4c4"/><rect x="7" y="67.1" width="2" height="1" fill="#c4c4c4"/><rect x="7" y="68.1" width="1" height="1" fill="#c4c4c4"/><rect x="9.5" y="68.9" width="2" height="1" fill="#c4c4c4"/><rect x="9.5" y="69.9" width="1" height="1" fill="#c4c4c4"/><rect x="7" y="70.8" width="2" height="1" fill="#c4c4c4"/><rect x="7" y="71.8" width="1" height="1" fill="#c4c4c4"/><rect x="9.5" y="72.6" width="2" height="1" fill="#c4c4c4"/><rect x="9.5" y="73.6" width="1" height="1" fill="#c4c4c4"/><rect x="7" y="74.5" width="2" height="1" fill="#c4c4c4"/><rect x="7" y="75.5" width="1" height="1" fill="#c4c4c4"/><rect x="9.5" y="76.3" width="2" height="1" fill="#c4c4c4"/><rect x="9.5" y="77.3" width="1" height="1" fill="#c4c4c4"/><rect x="7" y="78.2" width="2" height="1" fill="#c4c4c4"/><rect x="7" y="79.2" width="1" height="1" fill="#c4c4c4"/><rect x="9.5" y="80.0" width="2" height="1" fill="#c4c4c4"/><rect x="9.5" y="81.0" width="1" height="1" fill="#c4c4c4"/><path d="M15.5 66 H23.5 L19.5 70.5Z" fill="#000"/><rect x="7" y="88.0" width="2" height="1" fill="#c4c4c4"/><rect x="7" y="89.0" width="1" height="1" fill="#c4c4c4"/><rect x="9.5" y="89.8" width="2" height="1" fill="#c4c4c4"/><rect x="9.5" y="90.8" width="1" height="1" fill="#c4c4c4"/><rect x="7" y="91.7" width="2" height="1" fill="#c4c4c4"/><rect x="7" y="92.7" width="1" height="1" fill="#c4c4c4"/><rect x="9.5" y="93.5" width="2" height="1" fill="#c4c4c4"/><rect x="9.5" y="94.5" width="1" height="1" fill="#c4c4c4"/><rect x="7" y="95.4" width="2" height="1" fill="#c4c4c4"/><rect x="7" y="96.4" width="1" height="1" fill="#c4c4c4"/><rect x="9.5" y="97.2" width="2" height="1" fill="#c4c4c4"/><rect x="9.5" y="98.2" width="1" height="1" fill="#c4c4c4"/><rect x="7" y="99.1" width="2" height="1" fill="#c4c4c4"/><rect x="7" y="100.1" width="1" height="1" fill="#c4c4c4"/><rect x="9.5" y="100.9" width="2" height="1" fill="#c4c4c4"/><rect x="9.5" y="101.9" width="1" height="1" fill="#c4c4c4"/><rect x="7" y="102.8" width="2" height="1" fill="#c4c4c4"/><rect x="7" y="103.8" width="1" height="1" fill="#c4c4c4"/><rect x="9.5" y="104.6" width="2" height="1" fill="#c4c4c4"/><rect x="9.5" y="105.6" width="1" height="1" fill="#c4c4c4"/><rect x="7" y="106.5" width="2" height="1" fill="#c4c4c4"/><rect x="7" y="107.5" width="1" height="1" fill="#c4c4c4"/><rect x="9.5" y="108.3" width="2" height="1" fill="#c4c4c4"/><rect x="9.5" y="109.3" width="1" height="1" fill="#c4c4c4"/><rect x="7" y="110.2" width="2" height="1" fill="#c4c4c4"/><rect x="7" y="111.2" width="1" height="1" fill="#c4c4c4"/><rect x="9.5" y="112.0" width="2" height="1" fill="#c4c4c4"/><rect x="9.5" y="113.0" width="1" height="1" fill="#c4c4c4"/><path d="M15.5 98 H23.5 L19.5 102.5Z" fill="#000"/><rect x="240" y="56.0" width="2" height="1" fill="#c4c4c4"/><rect x="240" y="57.0" width="1" height="1" fill="#c4c4c4"/><rect x="242.5" y="57.8" width="2" height="1" fill="#c4c4c4"/><rect x="242.5" y="58.8" width="1" height="1" fill="#c4c4c4"/><rect x="240" y="59.7" width="2" height="1" fill="#c4c4c4"/><rect x="240" y="60.7" width="1" height="1" fill="#c4c4c4"/><rect x="242.5" y="61.5" width="2" height="1" fill="#c4c4c4"/><rect x="242.5" y="62.5" width="1" height="1" fill="#c4c4c4"/><rect x="240" y="63.4" width="2" height="1" fill="#c4c4c4"/><rect x="240" y="64.4" width="1" height="1" fill="#c4c4c4"/><rect x="242.5" y="65.2" width="2" height="1" fill="#c4c4c4"/><rect x="242.5" y="66.2" width="1" height="1" fill="#c4c4c4"/><rect x="240" y="67.1" width="2" height="1" fill="#c4c4c4"/><rect x="240" y="68.1" width="1" height="1" fill="#c4c4c4"/><rect x="242.5" y="68.9" width="2" height="1" fill="#c4c4c4"/><rect x="242.5" y="69.9" width="1" height="1" fill="#c4c4c4"/><rect x="240" y="70.8" width="2" height="1" fill="#c4c4c4"/><rect x="240" y="71.8" width="1" height="1" fill="#c4c4c4"/><rect x="242.5" y="72.6" width="2" height="1" fill="#c4c4c4"/><rect x="242.5" y="73.6" width="1" height="1" fill="#c4c4c4"/><rect x="240" y="74.5" width="2" height="1" fill="#c4c4c4"/><rect x="240" y="75.5" width="1" height="1" fill="#c4c4c4"/><rect x="242.5" y="76.3" width="2" height="1" fill="#c4c4c4"/><rect x="242.5" y="77.3" width="1" height="1" fill="#c4c4c4"/><rect x="240" y="78.2" width="2" height="1" fill="#c4c4c4"/><rect x="240" y="79.2" width="1" height="1" fill="#c4c4c4"/><rect x="242.5" y="80.0" width="2" height="1" fill="#c4c4c4"/><rect x="242.5" y="81.0" width="1" height="1" fill="#c4c4c4"/><path d="M248.5 66 H256.5 L252.5 70.5Z" fill="#000"/><path d="M288 66 H296 L292 70.5Z" fill="#000"/><path d="M326.5 66 H334.5 L330.5 70.5Z" fill="#777"/><rect x="586" y="88.0" width="2" height="1" fill="#c4c4c4"/><rect x="586" y="89.0" width="1" height="1" fill="#c4c4c4"/><rect x="588.5" y="89.8" width="2" height="1" fill="#c4c4c4"/><rect x="588.5" y="90.8" width="1" height="1" fill="#c4c4c4"/><rect x="586" y="91.7" width="2" height="1" fill="#c4c4c4"/><rect x="586" y="92.7" width="1" height="1" fill="#c4c4c4"/><rect x="588.5" y="93.5" width="2" height="1" fill="#c4c4c4"/><rect x="588.5" y="94.5" width="1" height="1" fill="#c4c4c4"/><rect x="586" y="95.4" width="2" height="1" fill="#c4c4c4"/><rect x="586" y="96.4" width="1" height="1" fill="#c4c4c4"/><rect x="588.5" y="97.2" width="2" height="1" fill="#c4c4c4"/><rect x="588.5" y="98.2" width="1" height="1" fill="#c4c4c4"/><rect x="586" y="99.1" width="2" height="1" fill="#c4c4c4"/><rect x="586" y="100.1" width="1" height="1" fill="#c4c4c4"/><rect x="588.5" y="100.9" width="2" height="1" fill="#c4c4c4"/><rect x="588.5" y="101.9" width="1" height="1" fill="#c4c4c4"/><rect x="586" y="102.8" width="2" height="1" fill="#c4c4c4"/><rect x="586" y="103.8" width="1" height="1" fill="#c4c4c4"/><rect x="588.5" y="104.6" width="2" height="1" fill="#c4c4c4"/><rect x="588.5" y="105.6" width="1" height="1" fill="#c4c4c4"/><rect x="586" y="106.5" width="2" height="1" fill="#c4c4c4"/><rect x="586" y="107.5" width="1" height="1" fill="#c4c4c4"/><rect x="588.5" y="108.3" width="2" height="1" fill="#c4c4c4"/><rect x="588.5" y="109.3" width="1" height="1" fill="#c4c4c4"/><rect x="586" y="110.2" width="2" height="1" fill="#c4c4c4"/><rect x="586" y="111.2" width="1" height="1" fill="#c4c4c4"/><rect x="588.5" y="112.0" width="2" height="1" fill="#c4c4c4"/><rect x="588.5" y="113.0" width="1" height="1" fill="#c4c4c4"/><path d="M595 98 H603 L599 102.5Z" fill="#000"/><path d="M175.5 98 H183.5 L179.5 102.5Z" fill="#000"/><path d="M213.5 98 H221.5 L217.5 102.5Z" fill="#000"/></svg>
<div class="a" style="left:26px;top:85px;width:30px;height:30px;background:linear-gradient(#bbbec4,#b4b7bd);border:1px solid #8e9196;border-radius:4px"></div>
<svg style="left:32px;top:58px" width="19" height="20" viewBox="0 0 19 20"><defs><linearGradient id="gnd" x1="0" y1="0" x2="1" y2="1"><stop offset="0" stop-color="#dcdcdc"/><stop offset="1" stop-color="#fafafa"/></linearGradient></defs><rect x="0.7" y="0.7" width="17" height="18.6" rx="1" fill="url(#gnd)" stroke="#888" stroke-width="1.2"/><circle cx="3.5" cy="6.5" r="0.6" fill="#999"/><circle cx="3.5" cy="11" r="0.6" fill="#999"/><circle cx="16" cy="3" r="2.6" fill="#fff" stroke="#f0e060" stroke-width="1.4"/></svg>
<svg style="left:59px;top:57px" width="24" height="20" viewBox="0 0 24 20"><path d="M1 4 H8 L9 6 H19 V18 H3Z" fill="#777" stroke="#555" stroke-width="0.8"/><path d="M7 1.5 H19 L17.5 12 H6Z" fill="#f4f4f4" stroke="#aaa" stroke-width="0.8"/><path d="M4.5 8 H23 L20 18.5 H2Z" fill="#6d9bd8" stroke="#3b67a8" stroke-width="1"/></svg>
<svg style="left:90px;top:56px" width="23" height="23" viewBox="0 0 23 23"><defs><linearGradient id="gsv" x1="0" y1="0" x2="0" y2="1"><stop offset="0" stop-color="#e4e4e4"/><stop offset="1" stop-color="#fafafa"/></linearGradient><linearGradient id="gvent" x1="0" y1="0" x2="1" y2="0"><stop offset="0" stop-color="#888"/><stop offset="0.5" stop-color="#ccc"/><stop offset="1" stop-color="#ddd"/></linearGradient></defs><path d="M3 6.5 H19 L21.3 14 V21.8 H0.7 V14 Z" fill="url(#gsv)" stroke="#6a6a6a" stroke-width="1.2" stroke-linejoin="round"/><path d="M1 14.5 H21" stroke="#bbb" stroke-width="0.8"/><rect x="3" y="16.5" width="16" height="3" fill="url(#gvent)"/><path d="M1.2 6 Q2.5 0.8 8.5 1 Q14.5 1.5 15.2 10 H18.2 L11.6 16.3 L5 10 H9.2 Q8.8 5 4.2 5.5 Z" fill="#4f8dc9" stroke="#2f6aa5" stroke-width="0.9" stroke-linejoin="round"/></svg>
<svg style="left:122px;top:58px" width="19" height="19" viewBox="0 0 19 19"><defs><linearGradient id="gcl" x1="0" y1="0" x2="0" y2="1"><stop offset="0" stop-color="#e25a5a"/><stop offset="0.5" stop-color="#cc2222"/><stop offset="1" stop-color="#aa1111"/></linearGradient></defs><rect x="0.6" y="0.6" width="17.8" height="17.8" rx="2" fill="url(#gcl)" stroke="#7a1010" stroke-width="1.2"/><path d="M5 5 L14 14 M14 5 L5 14" stroke="#fff" stroke-width="2.6"/></svg>
<svg style="left:151px;top:58px" width="21" height="20" viewBox="0 0 21 20"><rect x="5" y="0.6" width="11" height="9" fill="#f6f6f6" stroke="#777" stroke-width="1"/><path d="M10.5 2 L8 5 H13Z M9.8 5 H11.2 V8 H9.8Z" fill="#666"/><path d="M1 10 Q1 7 4 7 H17 Q20 7 20 10 V16 Q20 18 18 18 H3 Q1 18 1 16Z" fill="#d8d8d8" stroke="#666" stroke-width="1.2"/><rect x="3" y="12" width="15" height="2" fill="#999"/></svg>
<svg style="left:181px;top:58px" width="22" height="21" viewBox="0 0 22 21"><rect x="0.6" y="0.6" width="16" height="19" fill="#f8f8f8" stroke="#888" stroke-width="1"/><rect x="3" y="4" width="5" height="5" fill="#777"/><path d="M10 5 H14 M10 8 H14 M3 12 H14" stroke="#777" stroke-width="1.2"/><circle cx="9" cy="16" r="3.6" fill="#c8daf0" stroke="#3d6eb0" stroke-width="1.4"/><circle cx="17.5" cy="16" r="3.6" fill="#c8daf0" stroke="#3d6eb0" stroke-width="1.4"/><path d="M12.5 16 H14" stroke="#3d6eb0" stroke-width="1.4"/></svg>
<svg style="left:210px;top:57px" width="21" height="22" viewBox="0 0 21 22"><defs><linearGradient id="gpdf" x1="0" y1="0" x2="1" y2="1"><stop offset="0" stop-color="#fff"/><stop offset="0.6" stop-color="#dde2e8"/><stop offset="1" stop-color="#a0acb8"/></linearGradient></defs><rect x="0.6" y="5" width="16.5" height="16.4" fill="url(#gpdf)" stroke="#d04040" stroke-width="1"/><path d="M9 1 C7 1 8 6 10 10 C12 14 15 15 19 15 C21 15 20.5 12.5 17 12.5 C12 12.5 6 16 3 19 C1 21 3 21.5 5 19.5 C8 16 10.5 8 10.5 3.5 C10.5 1.5 9.8 1 9 1Z" fill="none" stroke="#ee1111" stroke-width="1.7"/></svg>
<svg style="left:263px;top:57px" width="19" height="22" viewBox="0 0 19 22"><path d="M7 1.5 L1 8 L7 14 V10.5 Q13 10 13.5 14 Q14 18 10 20 Q18 19 17.5 12 Q17 6 7 6Z" fill="#f0d83c" stroke="#b8a020" stroke-width="1"/></svg>
<svg style="left:303px;top:57px" width="20" height="22" viewBox="0 0 20 22"><path d="M12 1.5 L18.5 8 L12 14 V10.5 Q6 10 5.5 14 Q5 18 9 20 Q1 19 1.5 12 Q2 6 12 6Z" fill="#7a7a7a" stroke="#666" stroke-width="0.8"/></svg>
<svg style="left:340px;top:57px" width="19" height="21" viewBox="0 0 19 21"><path d="M2.5 1.5 L5 0.8 L11 12 L9 13Z" fill="#f6f6f6" stroke="#8a8a8a" stroke-width="0.9"/><path d="M16.5 1.5 L14 0.8 L8 12 L10 13Z" fill="#f6f6f6" stroke="#8a8a8a" stroke-width="0.9"/><ellipse cx="5" cy="16" rx="3.9" ry="3.6" fill="#fff" stroke="#d41818" stroke-width="2.2"/><ellipse cx="14" cy="16" rx="3.9" ry="3.6" fill="#fff" stroke="#d41818" stroke-width="2.2"/><circle cx="4.6" cy="16.2" r="1" fill="#d41818"/><circle cx="14.4" cy="16.2" r="1" fill="#d41818"/></svg>
<svg style="left:369px;top:57px" width="23" height="23" viewBox="0 0 23 23"><rect x="0.6" y="0.6" width="14" height="16.5" fill="#f4f4f4" stroke="#aaa" stroke-width="1"/><path d="M3 5 H11 M3 8 H11 M3 11 H11" stroke="#ccc"/><path d="M7 5 H21.4 V18 L17.5 21.4 H7Z" fill="#f8f8f8" stroke="#777" stroke-width="1.2"/><path d="M10 9 H18.5 M10 12 H18.5 M10 15 H16" stroke="#999" stroke-width="1"/><path d="M17.5 21.4 V18 H21.4" fill="#ddd" stroke="#777"/></svg>
<svg style="left:400px;top:57px" width="20" height="22" viewBox="0 0 20 22"><path d="M2 4 H7 Q8 1 10 1 Q12 1 13 4 H18 Q19.5 4 19.5 6 V19 Q19.5 21 18 21 H11 L10 22 L9 21 H2 Q0.5 21 0.5 19 V6 Q0.5 4 2 4Z" fill="#7a7a7a"/></svg>
<svg style="left:33px;top:92px" width="17" height="19" viewBox="0 0 17 19"><ellipse cx="9.5" cy="15.5" rx="6" ry="1.6" fill="#9a9da2" opacity="0.6"/><path d="M1.8 1.5 L14.5 5.5 L10.5 8 L15.5 13 L12.8 15.5 L7.8 10.5 L5.5 14.5Z" fill="#f2f2f2" stroke="#85878b" stroke-width="1" stroke-linejoin="round"/></svg>
<svg style="left:62px;top:91px" width="19" height="19" viewBox="0 0 19 19"><path d="M0.6 0.6 H17.4 V18.4 H0.6Z" fill="#fafafa" stroke="#aaa" stroke-width="1"/><text x="2.3" y="8.8" font-family="Liberation Sans" font-size="8.5" font-weight="bold" font-style="italic" fill="#555">A</text><path d="M9 3.5 H15 M9 6.5 H15 M3 10 H15 M3 13 H15 M3 16 H15" stroke="#4a4a4a" stroke-width="1"/></svg>
<svg style="left:91px;top:90px" width="20" height="18" viewBox="0 0 20 18"><defs><linearGradient id="gimf" x1="0" y1="0" x2="0" y2="1"><stop offset="0" stop-color="#4a4a4a"/><stop offset="0.45" stop-color="#8a6a4a"/><stop offset="1" stop-color="#e09a40"/></linearGradient></defs><rect x="0.8" y="0.8" width="18.4" height="16.4" rx="1" fill="#f4f4f4" stroke="#555" stroke-width="1.5"/><rect x="2.5" y="2.5" width="15" height="12.5" fill="#dcdcdc"/><rect x="3.5" y="4" width="13" height="9" rx="0.8" fill="url(#gimf)"/><path d="M4 13 A3.6 3.2 0 0 1 11 13Z" fill="#f2d020" stroke="#e84a20" stroke-width="0.8"/><path d="M13 13 V8 M11 6 L13 8 L15.5 5.5 M13 8 L14 6" stroke="#333" stroke-width="1" fill="none"/></svg>
<svg style="left:122px;top:91px" width="17" height="19" viewBox="0 0 17 19"><rect x="0.7" y="0.7" width="15.6" height="17.6" rx="1" fill="#fbf3c4" stroke="#c89e18" stroke-width="1.4"/><path d="M8.5 1 V18 M1 6.5 H16 M1 12.5 H16" stroke="#c8a030" stroke-width="0.9"/></svg>
<svg style="left:152px;top:91px" width="17" height="17" viewBox="0 0 17 17"><defs><linearGradient id="gsq" x1="0" y1="0" x2="1" y2="1"><stop offset="0" stop-color="#f6f6f6"/><stop offset="1" stop-color="#dcdcdc"/></linearGradient></defs><rect x="0.7" y="0.7" width="15.6" height="15.6" fill="url(#gsq)" stroke="#888" stroke-width="1.3"/></svg>
<svg style="left:190px;top:92px" width="17" height="16" viewBox="0 0 17 16"><path d="M8.5 0.8 L16.2 6.2 L13.3 15.2 H3.7 L0.8 6.2Z" fill="#f2f2f2" stroke="#999" stroke-width="1.1"/></svg>
<svg style="left:227px;top:90px" width="19" height="19" viewBox="0 0 19 19"><path d="M2.5 16.5 L16.5 2.5" stroke="#111" stroke-width="1.1"/><path d="M2.5 13.5 V19 M0 16.5 H5 M16.5 0 V5 M14 2.5 H19" stroke="#111" stroke-width="1.1"/></svg>
<svg style="left:256px;top:89px" width="20" height="22" viewBox="0 0 20 22"><rect x="1.5" y="1" width="4" height="20" fill="#f4f4f4" stroke="#777" stroke-width="1"/><path d="M4 6 Q10 0 16 5" stroke="#999" fill="none"/><path d="M12.5 7 Q15.5 4 18.5 7 L17.5 13 H13.5Z" fill="#f0d040" stroke="#a08010" stroke-width="0.9"/><rect x="13.3" y="13.5" width="4.5" height="8" fill="#3060a8"/></svg>
<svg style="left:288px;top:90px" width="19" height="19" viewBox="0 0 19 19"><path d="M3 13 L14 2 Q16 0.5 17.5 2 Q19 3.5 17 5.5 L6 16.5 L1.5 18 Z" fill="#d4a040" stroke="#8a6010" stroke-width="1"/><path d="M14 2 Q16 0.5 17.5 2 Q19 3.5 17 5.5 L15.5 7 L12.5 4Z" fill="#e05050"/><path d="M1.5 18 L3 13 L6 16.5Z" fill="#f0d8a0"/></svg>
<svg style="left:315px;top:91px" width="24" height="19" viewBox="0 0 24 19"><path d="M4 3 H13 V11 H4Z" fill="#3f72b8" stroke="#2a5090" stroke-width="0.8"/><path d="M12 4.5 L18 9.5 L12 17 L6 12Z" fill="#4a7cc0" stroke="#2a5090" stroke-width="0.8"/><path d="M16 2 Q21 2 21 6 L22.5 5 L21 9 L18.5 6.5 L20 6.5 Q20 3.5 16 3.5Z" fill="#fff" stroke="#3a6ab0" stroke-width="0.9"/><path d="M7 17 Q2 17 2 13 L0.5 14 L2 10 L4.5 12.5 L3 12.5 Q3 15.5 7 15.5Z" fill="#fff" stroke="#3a6ab0" stroke-width="0.9"/></svg>
<svg style="left:346px;top:88px" width="23" height="23" viewBox="0 0 23 23"><defs><linearGradient id="gzm" x1="0" y1="0" x2="0" y2="1"><stop offset="0" stop-color="#d8e6f6"/><stop offset="0.5" stop-color="#9ab8de"/><stop offset="1" stop-color="#b8cde8"/></linearGradient></defs><circle cx="9" cy="9" r="7.6" fill="url(#gzm)" stroke="#8a8a8a" stroke-width="1.8"/><path d="M14.5 14.5 L21 21" stroke="#555" stroke-width="3.2" stroke-linecap="round"/></svg>
<svg style="left:377px;top:90px" width="21" height="21" viewBox="0 0 21 21"><text x="0" y="17" font-family="Liberation Sans" font-size="18" font-weight="bold" fill="#f8f8f8" stroke="#666" stroke-width="1">A</text><path d="M13 1 H19 M16 1 V19 M13 19 H19" stroke="#111" stroke-width="1.6"/></svg>
<svg style="left:408px;top:90px" width="20" height="20" viewBox="0 0 20 20"><rect x="1" y="3" width="15" height="16" fill="#fafafa" stroke="#888" stroke-width="1"/><path d="M3 1.5 V5 M6 1.5 V5 M9 1.5 V5 M12 1.5 V5" stroke="#d0a000" stroke-width="1.8"/><path d="M3 9 H13 M3 12 H13 M3 15 H13" stroke="#999"/><path d="M5 16 L16 5 Q18 3 19 5 Q20 6 18 8 L7 18 L4 18.5Z" fill="#d49a40" stroke="#7a5010" stroke-width="0.8"/></svg>
<svg style="left:436px;top:90px" width="22" height="20" viewBox="0 0 22 20"><rect x="0.6" y="0.6" width="20.8" height="18.8" fill="#f6f6f6" stroke="#888" stroke-width="1"/><rect x="3" y="3" width="5" height="14" fill="#a8c4e4" stroke="#5c80b0" stroke-width="0.8"/><rect x="14" y="3" width="5" height="14" fill="#a8c4e4" stroke="#5c80b0" stroke-width="0.8"/><path d="M7 10 H11.5" stroke="#2a9a20" stroke-width="2.4"/><path d="M11 6.5 L15 10 L11 13.5Z" fill="#2a9a20"/></svg>
<svg style="left:466px;top:89px" width="23" height="21" viewBox="0 0 23 21"><path d="M0 0 H20 L22.5 2.5 V20.5 H0Z" fill="#7c7c7c"/><path d="M0.5 20.5 H22.5 V2.5" stroke="#fff" stroke-width="0.8" fill="none"/></svg>
<svg style="left:499px;top:89px" width="17" height="21" viewBox="0 0 17 21"><circle cx="8.5" cy="3" r="2" fill="none" stroke="#222" stroke-width="1.2"/><path d="M8.5 1 V5 M7.5 5 L1.5 20 M9.5 5 L15.5 20 M2 10 H15" stroke="#333" stroke-width="1.2"/><path d="M7.5 5 L1.5 20" stroke="#999" stroke-width="2"/><path d="M9.5 5 L15.5 20" stroke="#999" stroke-width="2"/><path d="M2 10 H15" stroke="#222" stroke-width="1"/></svg>
<svg style="left:528px;top:89px" width="18" height="21" viewBox="0 0 18 21"><path d="M7 8 L15.5 19.5" stroke="#444" stroke-width="2.2"/><path d="M6 0.5 L7.8 4.5 L12 4.8 L8.8 7.4 L9.8 11.5 L6 9.2 L2.2 11.5 L3.2 7.4 L0 4.8 L4.2 4.5Z" fill="#f8e040" stroke="#c8a010" stroke-width="0.8"/></svg>
<svg style="left:556px;top:88px" width="20" height="22" viewBox="0 0 20 22"><path d="M14 1.5 Q17 -0.5 18.5 2 Q20 4 17 7 L15 9 L11 5Z" fill="#1e3a6a"/><path d="M12 6 L3.5 15 Q2 17 3 18 L4 19 Q5 19.5 7 18 L15 9Z" fill="#b0c8e8" stroke="#4070b0" stroke-width="1"/><path d="M2.5 17 Q0.5 19.5 2 21 Q4 21.5 5 19.5Z" fill="#2a5aa0"/></svg>
<svg style="left:610px;top:93px" width="21" height="14" viewBox="0 0 21 14"><rect x="0.7" y="0.7" width="19" height="12.6" rx="1.5" fill="#c8cac8" stroke="#555" stroke-width="1.2"/><text x="3.5" y="10.2" font-family="Liberation Sans" font-size="8" font-weight="bold" fill="#333">OK</text></svg>
<svg style="left:641px;top:91px" width="18" height="18" viewBox="0 0 18 18"><rect x="0.6" y="0.6" width="16.8" height="16.8" fill="#fafafa" stroke="#888" stroke-width="1"/><path d="M3 4.5 H14 M3 7.5 H14 M3 10.5 H10.5" stroke="#333" stroke-width="1.1"/><path d="M11.5 9 H14.5 M13 9 V14.5 M11.5 14.5 H14.5" stroke="#222" stroke-width="0.9"/></svg>
<svg style="left:673px;top:92px" width="16" height="16" viewBox="0 0 16 16"><rect x="0.6" y="2.6" width="13.8" height="13" fill="#f4f4f4" stroke="#888" stroke-width="1"/><path d="M3 8 L6.5 13 L15 0.5" stroke="#222" stroke-width="2.6" fill="none"/></svg>
<svg style="left:700px;top:90px" width="21" height="20" viewBox="0 0 21 20"><rect x="0.6" y="0.6" width="16.4" height="18.8" fill="#fafafa" stroke="#888" stroke-width="1"/><rect x="17" y="1" width="3.5" height="3.5" fill="#333"/><path d="M2 3.5 H15" stroke="#aaa" stroke-width="1.2"/><path d="M2 7.5 H15 M2 16 H15" stroke="#999" stroke-width="1"/><rect x="1" y="10" width="16" height="3.5" fill="#7aa0d0"/></svg>
<svg style="left:730px;top:90px" width="22" height="20" viewBox="0 0 22 20"><rect x="0.6" y="0.6" width="20.4" height="18.8" fill="#fafafa" stroke="#888" stroke-width="1"/><rect x="17.5" y="5" width="3" height="14" fill="#c8c8c8"/><rect x="17.5" y="1" width="3.5" height="3.5" fill="#333"/><path d="M2 3.5 H15" stroke="#aaa" stroke-width="1.2"/><path d="M2 7.5 H15 M2 16 H15" stroke="#999" stroke-width="1"/><rect x="1" y="10" width="16" height="3.5" fill="#7aa0d0"/></svg>
<svg style="left:760px;top:90px" width="20" height="20" viewBox="0 0 20 20"><defs><linearGradient id="gan" x1="0" y1="0" x2="1" y2="1"><stop offset="0" stop-color="#f2d820"/><stop offset="1" stop-color="#f8e85a"/></linearGradient></defs><path d="M0.7 0.7 H19.3 V14 L14 19.3 H0.7Z" fill="url(#gan)" stroke="#c8a010" stroke-width="1.2"/><path d="M14 19.3 V14 H19.3" fill="#f8f0a0" stroke="#c8a010" stroke-width="1"/></svg>
<svg style="left:793px;top:89px" width="14" height="22" viewBox="0 0 14 22"><ellipse cx="9" cy="5" rx="3.6" ry="5" transform="rotate(30 9 5)" fill="#222"/><ellipse cx="4" cy="11" rx="2" ry="1.6" fill="#333"/><ellipse cx="8" cy="15" rx="3.6" ry="5" transform="rotate(30 8 15)" fill="#222"/><ellipse cx="3.5" cy="20" rx="2" ry="1.6" fill="#333"/></svg>
<div class="a" style="left:0px;top:127px;width:10px;height:496px;background:linear-gradient(90deg,#8e9db1,#9aa8bb);border-right:1px solid #55606e;border-top:1px solid #55606e;border-bottom:1px solid #55606e;border-top-right-radius:3px"></div>
<div class="a" style="left:0px;top:146px;width:6px;height:473px;background:#efefef;border-right:1px solid #7d8a9c"></div>
<div class="a" style="left:-6px;top:131px;width:10px;height:13px;background:#aab6c6;border:1px solid #7d8a9c;border-radius:3px"></div>
<div class="a" style="left:903px;top:27px;width:43px;height:573px;background:#efefef;border-left:4px solid #8d9cb0;border-bottom:4px solid #8d9cb0"></div>
<div class="a" style="left:903px;top:27px;width:1px;height:573px;background:#4d5866"></div>
<div class="a" style="left:903px;top:599px;width:43px;height:1px;background:#4d5866"></div>
<div class="a" style="left:903px;top:27px;width:43px;height:19px;background:linear-gradient(#a3b0c0,#8797ab);border-top:1px solid #4d5866;border-left:1px solid #4d5866;border-top-left-radius:3px"></div>
<svg style="left:910px;top:32px" width="11" height="11" viewBox="0 0 11 11"><defs><radialGradient id="sg91032" cx="40%" cy="30%" r="70%"><stop offset="0" stop-color="#a9d0ec"/><stop offset="0.5" stop-color="#3d86c0"/><stop offset="1" stop-color="#1f4f80"/></radialGradient></defs><circle cx="5.5" cy="5.5" r="5.0" fill="url(#sg91032)" stroke="#284e74" stroke-width="0.7"/><path d="M2.75 6.82 Q5.5 8.8 9.35 6.050000000000001" stroke="#bcd8ee" stroke-width="0.88" fill="none" opacity="0.7"/><path d="M8.25 1.65 L6.050000000000001 8.25" stroke="#d9b050" stroke-width="1.1"/></svg>
<div class="t" style="left:929.8px;top:34.16px;font-size:9.5px;color:#56606c">Properties</div>
<div class="t" style="left:929px;top:33.36px;font-size:9.5px;color:#fff">Properties</div>
<div class="a" style="left:912px;top:52px;width:34px;height:1px;background:#8a8a8a"></div>
<div class="a" style="left:912px;top:53px;width:34px;height:1px;background:#fff"></div>
<div class="t" style="left:916px;top:58.09px;font-size:11px;font-weight:bold">X, Y, <span style="text-decoration:underline">Z</span></div>
<div class="a" style="left:912px;top:84px;width:40px;height:39px;border:1px solid #a8a8a8;border-radius:4px"></div>
<div class="a" style="left:919px;top:78px;width:30px;height:10px;background:#efefef"></div>
<div class="t" style="left:920.8px;top:77.14px;font-size:12px;">Name</div>
<div class="a" style="left:917px;top:95px;width:40px;height:23px;background:#fff;border:1px solid #9a9ba0;border-radius:3px"></div>
<div class="t" style="left:920.8px;top:101.04px;font-size:12px;">Text2</div>
<div class="a" style="left:912px;top:137px;width:40px;height:195px;border:1px solid #a8a8a8;border-radius:4px"></div>
<div class="a" style="left:919px;top:130px;width:30px;height:10px;background:#efefef"></div>
<div class="t" style="left:920.8px;top:130.34px;font-size:12px;">Geometry</div>
<div class="t" style="left:918px;top:153.94px;font-size:12px;"><span style="text-decoration:underline">X</span>-Pos:</div>
<div class="t" style="left:918px;top:180.14px;font-size:12px;"><span style="text-decoration:underline">Y</span>-Pos:</div>
<div class="t" style="left:918px;top:207.04px;font-size:12px;"><span style="text-decoration:underline">W</span>idth:</div>
<div class="t" style="left:918px;top:233.84px;font-size:12px;"><span style="text-decoration:underline">He</span>ight:</div>
<div class="t" style="left:918px;top:260.14px;font-size:12px;"><span style="text-decoration:underline">R</span>otation:</div>
<div class="t" style="left:918px;top:299.64px;font-size:12px;">Basepoint:</div>
<div class="a" style="left:912px;top:348px;width:40px;height:61px;border:1px solid #a8a8a8;border-radius:4px"></div>
<div class="a" style="left:919px;top:342px;width:30px;height:10px;background:#efefef"></div>
<div class="t" style="left:920.8px;top:341.34px;font-size:12px;">Level</div>
<div class="a" style="left:917px;top:359px;width:22px;height:21px;background:linear-gradient(#f5f5f6,#dcdde2);border:1px solid #9a9ba0;border-radius:3px"></div>
<div class="a" style="left:943px;top:359px;width:10px;height:21px;background:linear-gradient(#f5f5f6,#dcdde2);border:1px solid #9a9ba0;border-radius:3px"></div>
<div class="a" style="left:917px;top:384px;width:22px;height:21px;background:linear-gradient(#f5f5f6,#dcdde2);border:1px solid #9a9ba0;border-radius:3px"></div>
<div class="a" style="left:943px;top:384px;width:10px;height:21px;background:linear-gradient(#f5f5f6,#dcdde2);border:1px solid #9a9ba0;border-radius:3px"></div>
<svg style="left:920px;top:362px" width="16" height="16" viewBox="0 0 16 16"><defs><linearGradient id="gup" x1="0" y1="0" x2="0" y2="1"><stop offset="0" stop-color="#9ee070"/><stop offset="1" stop-color="#3ca820"/></linearGradient></defs><path d="M8 1 L15 8 H11 V14.5 H5 V8 H1Z" fill="url(#gup)" stroke="#2f8a18" stroke-width="1"/></svg>
<svg style="left:920px;top:387px" width="16" height="16" viewBox="0 0 16 16"><defs><linearGradient id="gdn" x1="0" y1="0" x2="0" y2="1"><stop offset="0" stop-color="#9ee070"/><stop offset="1" stop-color="#3ca820"/></linearGradient></defs><path d="M8 15 L15 8 H11 V1.5 H5 V8 H1Z" fill="url(#gdn)" stroke="#2f8a18" stroke-width="1"/></svg>
<div class="a" style="left:912px;top:448px;width:34px;height:1px;background:#8a8a8a"></div>
<div class="a" style="left:912px;top:449px;width:34px;height:1px;background:#fff"></div>
<div class="t" style="left:917.3px;top:453.04px;font-size:12px;color:#000"><span style="text-decoration:underline">S</span>hape</div>
<div class="a" style="left:912px;top:472px;width:34px;height:1px;background:#8a8a8a"></div>
<div class="a" style="left:912px;top:473px;width:34px;height:1px;background:#fff"></div>
<div class="t" style="left:917.3px;top:477.14px;font-size:12px;color:#b8b8b8"><span style="text-decoration:underline">G</span>roup</div>
<div class="a" style="left:912px;top:496px;width:34px;height:1px;background:#8a8a8a"></div>
<div class="a" style="left:912px;top:497px;width:34px;height:1px;background:#fff"></div>
<div class="t" style="left:917.3px;top:501.24px;font-size:12px;color:#000"><span style="text-decoration:underline">T</span>ext</div>
<div class="a" style="left:912px;top:520px;width:34px;height:1px;background:#8a8a8a"></div>
<div class="a" style="left:912px;top:521px;width:34px;height:1px;background:#fff"></div>
<div class="t" style="left:917.3px;top:525.34px;font-size:12px;color:#b8b8b8"><span style="text-decoration:underline">I</span>mage</div>
<div class="a" style="left:912px;top:544px;width:34px;height:1px;background:#8a8a8a"></div>
<div class="a" style="left:912px;top:545px;width:34px;height:1px;background:#fff"></div>
<div class="t" style="left:917.3px;top:549.44px;font-size:12px;color:#000"><span style="text-decoration:underline">L</span>ine</div>
<div class="a" style="left:912px;top:568px;width:34px;height:1px;background:#8a8a8a"></div>
<div class="a" style="left:912px;top:569px;width:34px;height:1px;background:#fff"></div>
<div class="t" style="left:917.3px;top:573.54px;font-size:12px;color:#000"><span style="text-decoration:underline">C</span>olors</div>
<div class="a" style="left:527px;top:119px;width:5px;height:2px;background:#ff0000"></div>
<div class="a" style="left:528px;top:121px;width:3px;height:2px;background:#ff0000"></div>
<div class="a" style="left:529px;top:119px;width:1px;height:17px;background:#ff0000"></div>
<div class="a" style="left:10px;top:254px;width:13px;height:1px;background:#ff0000"></div>
<!--END-->
</body></html>
